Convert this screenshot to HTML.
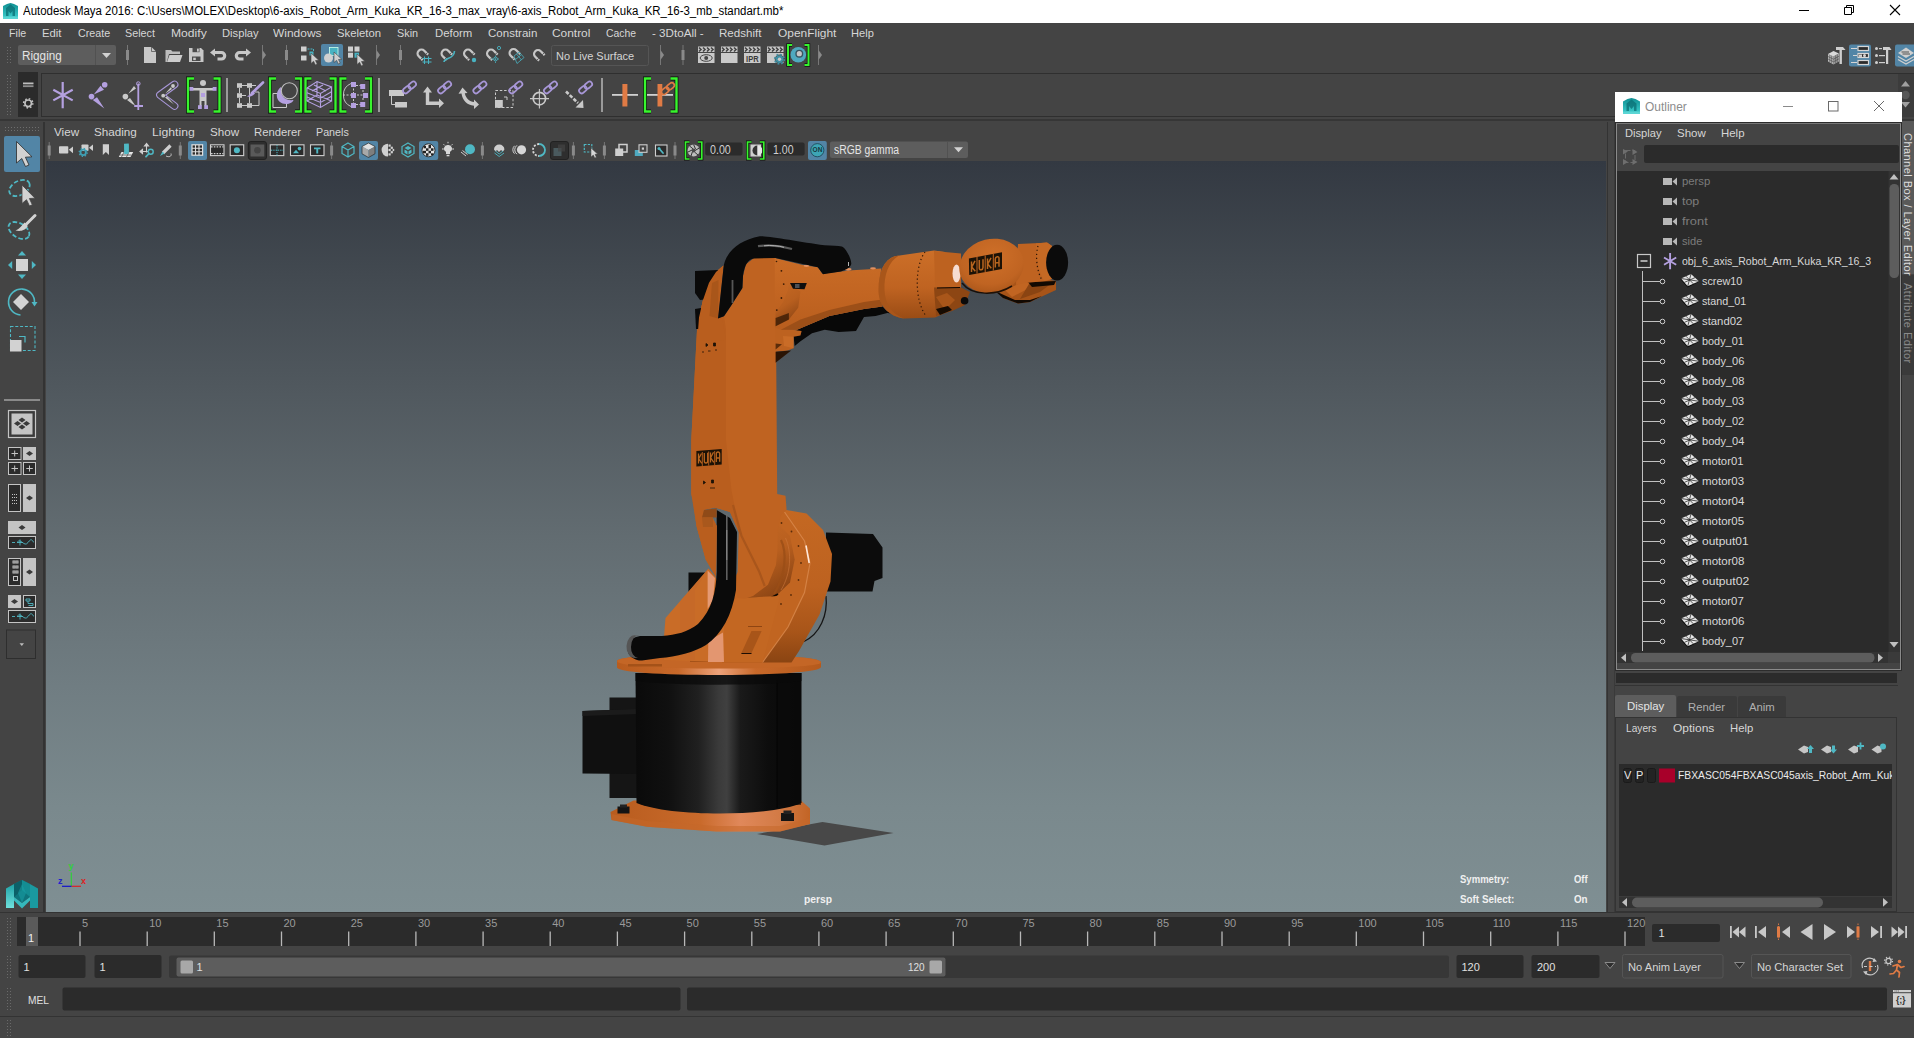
<!DOCTYPE html>
<html><head><meta charset="utf-8"><title>Autodesk Maya 2016</title>
<style>
*{box-sizing:border-box;margin:0;padding:0}
html,body{width:1914px;height:1038px;overflow:hidden;background:#444444;font-family:"Liberation Sans",sans-serif;font-size:11px;color:#d8d8d8}
.a{position:absolute}
.t{position:absolute;white-space:nowrap;line-height:14px}
svg{position:absolute;overflow:visible}
.m{top:26px;color:#d6d6d6;font-size:11px}
.pm{top:124.5px;color:#d6d6d6;font-size:11px}
.hud{color:#f0f0f0;font-size:10px;font-weight:bold;line-height:12px}
.tl{top:916px;color:#9a9a9a;font-size:11px}

</style></head>
<body>
<!-- titlebar.html -->
<div class="a" style="left:0;top:0;width:1914px;height:23px;background:#ffffff"></div>
<svg style="left:3px;top:3px" width="15" height="16" viewBox="0 0 15 16">
  <defs><linearGradient id="mg" x1="0" y1="0" x2="0" y2="1"><stop offset="0" stop-color="#0f8f92"/><stop offset="1" stop-color="#3fd0cf"/></linearGradient></defs>
  <path d="M0 3 L4 1 L7.5 0 L11 1 L15 3 L15 16 L0 16 Z" fill="url(#mg)"/>
  <path d="M3 13 L3 5 L7.5 1.5 L12 5 L12 13 L9.5 13 L9.5 8 L7.5 10.5 L5.500 8 L5.5 13 Z" fill="#0b6f74" opacity=".75"/>
  <rect x="0" y="13.500" width="15" height="2.5" fill="#6fdcda" opacity=".6"/>
</svg>
<div class="t" style="transform:scaleX(0.9158);transform-origin:0 50%;left:23px;top:3.500px;color:#000;font-size:12.500px;line-height:15px">Autodesk Maya 2016: C:\Users\MOLEX\Desktop\6-axis_Robot_Arm_Kuka_KR_16-3_max_vray\6-axis_Robot_Arm_Kuka_KR_16-3_mb_standart.mb*</div>
<svg style="left:1790px;top:0" width="124" height="23" viewBox="0 0 124 23">
  <path d="M9 10.500 H19" stroke="#000" stroke-width="1" fill="none"/>
  <path d="M56.5 7.500 V5.500 H63.5 V12.500 H61.5 M54.5 7.500 H61.5 V14.500 H54.5 Z" stroke="#000" stroke-width="1" fill="none"/>
  <path d="M100 5 L110 15 M110 5 L100 15" stroke="#000" stroke-width="1.1" fill="none"/>
</svg>

<!-- menubar.html -->
<div class="a" style="left:0;top:23px;width:1914px;height:21px;background:#444444"></div>
<span class="t m" style="transform:scaleX(0.9699);transform-origin:0 50%;left:9.4px">File</span>
<span class="t m" style="transform:scaleX(1.0280);transform-origin:0 50%;left:42.3px">Edit</span>
<span class="t m" style="transform:scaleX(0.9748);transform-origin:0 50%;left:77.6px">Create</span>
<span class="t m" style="transform:scaleX(0.9778);transform-origin:0 50%;left:125.3px">Select</span>
<span class="t m" style="transform:scaleX(1.1016);transform-origin:0 50%;left:170.5px">Modify</span>
<span class="t m" style="transform:scaleX(1.0172);transform-origin:0 50%;left:221.5px">Display</span>
<span class="t m" style="transform:scaleX(1.0868);transform-origin:0 50%;left:273.2px">Windows</span>
<span class="t m" style="transform:scaleX(1.0277);transform-origin:0 50%;left:337.4px">Skeleton</span>
<span class="t m" style="transform:scaleX(0.9857);transform-origin:0 50%;left:397.4px">Skin</span>
<span class="t m" style="transform:scaleX(1.0343);transform-origin:0 50%;left:434.6px">Deform</span>
<span class="t m" style="transform:scaleX(1.0472);transform-origin:0 50%;left:487.5px">Constrain</span>
<span class="t m" style="transform:scaleX(1.0826);transform-origin:0 50%;left:552.4px">Control</span>
<span class="t m" style="transform:scaleX(0.9466);transform-origin:0 50%;left:606.4px">Cache</span>
<span class="t m" style="transform:scaleX(1.0571);transform-origin:0 50%;left:652.1px">- 3DtoAll -</span>
<span class="t m" style="transform:scaleX(1.0530);transform-origin:0 50%;left:719.4px">Redshift</span>
<span class="t m" style="transform:scaleX(1.0852);transform-origin:0 50%;left:777.6px">OpenFlight</span>
<span class="t m" style="transform:scaleX(1.0077);transform-origin:0 50%;left:851.1px">Help</span>

<!-- statusline.html -->
<svg style="left:0;top:44px" width="1914" height="26" viewBox="0 44 1914 26">
<defs>
 <g id="hdl"><rect x="-0.500" y="45" width="1" height="20" fill="#777"/><rect x="-1.500" y="50" width="3" height="10" fill="#8a8a8a"/></g>
 <g id="col"><rect x="-0.500" y="45" width="1" height="20" fill="#777"/><path d="M0 50 L3.500 55 L0 60 Z" fill="#8a8a8a"/></g>
 <g id="cur"><path d="M0 0 L0 10.500 L2.600 8.300 L4.400 12 L6.200 11.100 L4.500 7.500 L7.800 7.300 Z" fill="#cfcfcf" stroke="#444" stroke-width=".6"/></g>
 <g id="mag"><path d="M-3.900 5.500 V0 A3.900 3.900 0 0 1 3.900 0 V5.500" stroke="#c6c6c6" stroke-width="2.300" fill="none"/><path d="M-5.200 3.600 H-2.600 M2.600 3.600 H5.200" stroke="#444" stroke-width=".8"/></g>
</defs>
<!-- grip dots -->
<g fill="#6a6a6a"><rect x="7" y="47" width="1" height="1"/><rect x="10" y="47" width="1" height="1"/><rect x="7" y="50" width="1" height="1"/><rect x="10" y="50" width="1" height="1"/><rect x="7" y="53" width="1" height="1"/><rect x="10" y="53" width="1" height="1"/><rect x="7" y="56" width="1" height="1"/><rect x="10" y="56" width="1" height="1"/><rect x="7" y="59" width="1" height="1"/><rect x="10" y="59" width="1" height="1"/><rect x="7" y="62" width="1" height="1"/><rect x="10" y="62" width="1" height="1"/></g>
<!-- Rigging dropdown -->
<rect x="18" y="45" width="98" height="20" rx="2" fill="#5d5d5d"/>
<rect x="95" y="45" width="1" height="20" fill="#515151"/>
<path d="M102 53 L111 53 L106.500 58 Z" fill="#d2d2d2"/>
<use href="#hdl" x="127.500"/>
<!-- new -->
<path d="M144 47 H151.500 L156 51.500 V63 H144 Z" fill="#c8c8c8"/><path d="M151.500 47 V51.500 H156" fill="none" stroke="#555" stroke-width=".8"/>
<!-- open -->
<path d="M165.500 62 V50 H171 L172.500 51.500 H180 V54 H169 L166.800 62 Z" fill="#bdbdbd"/><path d="M169.500 55 H182.500 L180 62 H167 Z" fill="#cdcdcd"/>
<!-- save -->
<path d="M189 48 H201 L203.500 50.500 V62 H189 Z" fill="#c8c8c8"/><rect x="192.500" y="48" width="7" height="4.200" fill="#4a4a4a"/><rect x="197" y="48.600" width="1.800" height="3" fill="#c8c8c8"/><rect x="192" y="56.500" width="8.500" height="4.500" fill="#4a4a4a"/><rect x="193.200" y="57.700" width="2.600" height="2.400" fill="#c8c8c8"/>
<!-- undo -->
<path d="M210 52.500 L215 48.500 V51 H221.500 A4.800 4.800 0 0 1 221.500 60.600 H217.500 V57.600 H221.300 A1.800 1.800 0 0 0 221.300 54 H215 V56.500 Z" fill="#c8c8c8"/>
<!-- redo -->
<path d="M251 52.500 L246 48.500 V51 H239.500 A4.800 4.800 0 0 0 239.500 60.600 H243.500 V57.600 H239.700 A1.800 1.800 0 0 1 239.700 54 H246 V56.500 Z" fill="#c8c8c8"/>
<use href="#col" x="262.500"/>
<use href="#hdl" x="286.500"/>
<!-- select by hierarchy -->
<rect x="301" y="46.500" width="5.500" height="5" fill="#cfcfcf"/><rect x="301" y="55.500" width="5.500" height="5" fill="#cfcfcf"/><path d="M307.500 49 H313.500 V52" stroke="#49b3c2" stroke-width="1" fill="none" stroke-dasharray="2 1"/><rect x="309.500" y="51.500" width="4" height="4" fill="#49b3c2"/><use href="#cur" x="311" y="53"/>
<!-- select by object (active) -->
<rect x="321" y="44" width="22" height="22" rx="2" fill="#5285a6"/>
<rect x="329.500" y="47.500" width="8.500" height="8" fill="#49b3c2" stroke="#cfe" stroke-width=".8"/><circle cx="328.500" cy="58" r="4.500" fill="#d0d0d0"/><use href="#cur" x="334" y="52"/>
<!-- select by component -->
<rect x="348" y="46.500" width="5" height="5" fill="#cfcfcf"/><rect x="354.500" y="46.500" width="5" height="5" fill="#cfcfcf"/><rect x="348" y="52.700" width="5" height="5" fill="#cfcfcf"/><rect x="354.500" y="52.700" width="4.500" height="5" fill="#49b3c2"/><use href="#cur" x="357" y="54"/>
<use href="#col" x="376.500"/>
<use href="#hdl" x="400.500"/>
<!-- snap magnets -->
<g transform="translate(421.500,53.500) rotate(-45)"><use href="#mag"/></g>
<path d="M424.500 56.500 V64 M428.500 56.500 V64 M422.500 58.500 H431.500 M422.500 62 H431.500" stroke="#49b3c2" stroke-width="1.100" fill="none"/>
<g transform="translate(445.500,53.500) rotate(-45)"><use href="#mag"/></g>
<path d="M444 62 C444 57 454 60 454.500 51" stroke="#49b3c2" stroke-width="1.600" fill="none"/>
<g transform="translate(468,53.500) rotate(-45)"><use href="#mag"/></g>
<circle cx="474" cy="60" r="2.200" fill="#49b3c2"/>
<g transform="translate(491,53.500) rotate(-45)"><use href="#mag"/></g>
<circle cx="499" cy="48" r="1.600" fill="none" stroke="#49b3c2" stroke-width=".9"/><circle cx="495.500" cy="59" r="1.900" fill="none" stroke="#49b3c2" stroke-width=".9"/><path d="M495.500 55.500 V63 M491.500 59 H500.500" stroke="#49b3c2" stroke-width=".8" stroke-dasharray="1.500 1.500"/>
<g transform="translate(513.500,53) rotate(-45)"><use href="#mag"/></g>
<path d="M514 56 L519 52 L524 57.500 L517 63.500 Z M516.500 54 L521.500 60 M515.500 59.500 L521 55" stroke="#49b3c2" stroke-width=".8" fill="none"/>
<g transform="translate(538,54) rotate(-45)"><use href="#mag"/></g>
<!-- no live surface -->
<rect x="551.500" y="45.500" width="97" height="20" rx="2" fill="#444" stroke="#555" stroke-width="1"/>
<use href="#col" x="660.500"/>
<use href="#hdl" x="683"/>

<!-- render icons -->
<defs>
 <g id="clap"><rect x="0" y="0" width="16.500" height="5.500" fill="#c9c9c9"/><path d="M1 1 L3 3 L1 5 M5 1 L7 3 L5 5 M9 1 L11 3 L9 5 M13 1 L15 3 L13 5" stroke="#444" stroke-width="1.600" fill="none"/><rect x="0" y="6.500" width="16.500" height="10" fill="#c9c9c9"/></g>
</defs>
<use href="#clap" x="698" y="46.500"/>
<ellipse cx="706.200" cy="58" rx="6" ry="3.300" fill="none" stroke="#444" stroke-width="1"/><circle cx="706.200" cy="58" r="2" fill="#444"/>
<use href="#clap" x="721" y="46.500"/>
<use href="#clap" x="744" y="46.500"/>
<text x="752.300" y="61.600" font-size="8.500" font-weight="bold" text-anchor="middle" fill="#3a3a3a" font-family="Liberation Sans, sans-serif" textLength="12.500" lengthAdjust="spacingAndGlyphs">IPR</text>
<use href="#clap" x="767" y="46.500"/>
<circle cx="779.500" cy="59.200" r="4.300" fill="#3f8fa3" stroke="#444" stroke-width=".8"/><circle cx="779.500" cy="59.200" r="4.800" fill="none" stroke="#3f8fa3" stroke-width="1.600" stroke-dasharray="1.800 1.970"/><circle cx="779.500" cy="59.200" r="1.700" fill="#c9c9c9"/>
<!-- bracket render -->
<circle cx="798.300" cy="54.800" r="7.800" fill="#4fa9bf"/><circle cx="799.300" cy="53.700" r="3.300" fill="#c6c6c6" stroke="#3a5560" stroke-width="1.400"/>
<path d="M792 45 H788 V65 H792 M804.500 45 H808.500 V65 H804.500" stroke="#111" stroke-width="3.400" fill="none"/>
<path d="M792 45 H788 V65 H792 M804.500 45 H808.500 V65 H804.500" stroke="#35f52c" stroke-width="2" fill="none"/>
<use href="#col" x="818.500"/>
<!-- right icons -->
<g>
 <path d="M1828 54 L1833.500 51 L1839 53.500 L1833.500 56.500 Z" fill="#dadada"/><path d="M1828 54 L1833.500 56.500 V64.500 L1828 61.500 Z" fill="#bdbdbd"/><path d="M1833.500 56.500 L1839 53.500 V61.500 L1833.500 64.500 Z" fill="#a4a4a4"/>
 <path d="M1828 56.500 L1833.500 59.200 L1839 56.200 M1828 59 L1833.500 61.800 L1839 58.800 M1829.800 55 V62.500 M1831.700 56 V63.500 M1835.300 55.500 V63.500 M1837.200 54.500 V62.500" stroke="#444" stroke-width=".6" fill="none"/>
 <path d="M1836 47 H1843 L1845.500 50 H1836 Z" fill="#cfcfcf"/><rect x="1839.500" y="50" width="2.400" height="14" fill="#cfcfcf"/>
 <rect x="1849" y="44.500" width="22" height="22" rx="2" fill="#5285a6"/>
 <g fill="none" stroke="#d6d6d6" stroke-width="1.200"><path d="M1851 48.500 H1857 M1853 55.500 H1857 M1851 62.500 H1857"/><rect x="1858" y="46.500" width="10.500" height="4" fill="#2c2c2c"/><rect x="1858" y="53.500" width="10.500" height="4" fill="#2c2c2c"/><rect x="1858" y="60.500" width="10.500" height="4" fill="#2c2c2c"/></g>
 <rect x="1859" y="54.500" width="3" height="2.400" fill="#d6d6d6"/><circle cx="1864.500" cy="55.600" r="1.500" fill="#d6d6d6"/>
 <g fill="#cfcfcf"><circle cx="1876.500" cy="48.500" r="1.500"/><circle cx="1876.500" cy="55.500" r="1.500"/><circle cx="1876.500" cy="62.500" r="1.500"/><rect x="1879" y="48" width="3" height="1.200"/><rect x="1879" y="55" width="6" height="1.200"/><rect x="1879" y="62" width="6" height="1.200"/><path d="M1883 47 H1889.500 L1891.500 50 H1883 Z"/><rect x="1886" y="50" width="2.200" height="14"/></g>
 <rect x="1895" y="44.500" width="22" height="22" rx="2" fill="#5285a6"/>
 <path d="M1898 59.500 L1906 64 L1914 59.500 M1898 56.500 L1906 61 L1914 56.500" stroke="#cfcfcf" stroke-width="1.300" fill="none"/>
 <path d="M1898 53 L1906 47.500 L1914 53 L1906 58 Z" fill="#cfcfcf"/><path d="M1901.500 52 H1909 M1902.500 54 H1910" stroke="#444" stroke-width=".9"/>
</g>
</svg>
<div class="t" style="transform:scaleX(0.9778);transform-origin:0 50%;left:21.500px;top:49px;color:#e4e4e4;font-size:12px">Rigging</div>
<div class="t" style="transform:scaleX(0.9557);transform-origin:0 50%;left:556px;top:49px;color:#d4d4d4;font-size:11.500px">No Live Surface</div>

<!-- shelf.html -->
<div class="a" style="left:18px;top:72px;width:20px;height:45px;background:#2b2b2b"></div>
<div class="a" style="left:41px;top:73px;width:1873px;height:44px;background:#444;border:1px solid #2f2f2f;border-right:none"></div>
<svg style="left:0;top:70px" width="1914" height="50" viewBox="0 70 1914 50">
<defs>
 <g id="brk"><path d="M6 0 H0 V33 H6" stroke="#0a0a0a" stroke-width="3.800" fill="none"/><path d="M6 0 H0 V33 H6" stroke="#38f52e" stroke-width="2.400" fill="none"/></g>
 <g id="brkr"><path d="M-6 0 H0 V33 H-6" stroke="#0a0a0a" stroke-width="3.800" fill="none"/><path d="M-6 0 H0 V33 H-6" stroke="#38f52e" stroke-width="2.400" fill="none"/></g>
 <g id="chain" fill="none" stroke="#a897d8" stroke-width="1.700"><g transform="rotate(-40)"><rect x="-7.500" y="-2.600" width="8.500" height="5.200" rx="2.600"/><rect x="-0.500" y="-2.600" width="8.500" height="5.200" rx="2.600"/></g></g>
 <g id="chaino" fill="none" stroke="#e07b45" stroke-width="1.700"><g transform="rotate(-40)"><rect x="-7.500" y="-2.600" width="8.500" height="5.200" rx="2.600"/><rect x="-0.500" y="-2.600" width="8.500" height="5.200" rx="2.600"/></g></g>
</defs>
<!-- grip -->
<g fill="#6a6a6a"><rect x="7" y="75" width="1" height="1"/><rect x="10" y="75" width="1" height="1"/><rect x="7" y="78" width="1" height="1"/><rect x="10" y="78" width="1" height="1"/><rect x="7" y="81" width="1" height="1"/><rect x="10" y="81" width="1" height="1"/><rect x="7" y="84" width="1" height="1"/><rect x="10" y="84" width="1" height="1"/><rect x="7" y="87" width="1" height="1"/><rect x="10" y="87" width="1" height="1"/><rect x="7" y="90" width="1" height="1"/><rect x="10" y="90" width="1" height="1"/><rect x="7" y="93" width="1" height="1"/><rect x="10" y="93" width="1" height="1"/><rect x="7" y="96" width="1" height="1"/><rect x="10" y="96" width="1" height="1"/><rect x="7" y="99" width="1" height="1"/><rect x="10" y="99" width="1" height="1"/><rect x="7" y="102" width="1" height="1"/><rect x="10" y="102" width="1" height="1"/><rect x="7" y="105" width="1" height="1"/><rect x="10" y="105" width="1" height="1"/><rect x="7" y="108" width="1" height="1"/><rect x="10" y="108" width="1" height="1"/><rect x="7" y="111" width="1" height="1"/><rect x="10" y="111" width="1" height="1"/><rect x="7" y="114" width="1" height="1"/><rect x="10" y="114" width="1" height="1"/></g>
<!-- tab icons -->
<rect x="23" y="82.500" width="10.500" height="1.800" fill="#bdbdbd"/><rect x="23" y="85.300" width="10.500" height="1.800" fill="#8e8e8e"/>
<circle cx="28.200" cy="103.300" r="3.300" fill="none" stroke="#c0c0c0" stroke-width="1.700"/><circle cx="28.200" cy="103.300" r="4.600" fill="none" stroke="#c0c0c0" stroke-width="1.500" stroke-dasharray="1.600 2.010"/>
<!-- joint -->
<path d="M62.700 82 V108.200 M53.300 89.800 L72.700 100.400 M53.300 100.400 L72.700 89.800" stroke="#b4a0e0" stroke-width="2.200" fill="none"/>
<!-- IK handle -->
<g fill="#b4a0e0"><circle cx="104.700" cy="84.800" r="2.800"/><circle cx="91.500" cy="96.600" r="2.800"/><path d="M100.500 85.800 L104 89.800 L93.800 94.600 Z"/><path d="M92.800 100 L97 97.300 L104.300 108.500 Z"/></g>
<!-- IK spline -->
<g fill="#c9c9c9"><circle cx="125.400" cy="96.600" r="2.800"/><path d="M134 86 L136 88.500 L128.300 93.800 Z M127 100 L130 98 L135 105 L133 104.500 Z"/></g>
<path d="M138.300 83.500 V110 M134.200 106 H143" stroke="#b4a0e0" stroke-width="1.800" fill="none"/><circle cx="138.300" cy="83.600" r="1.800" fill="none" stroke="#b4a0e0" stroke-width="1"/>
<!-- human IK chevron -->
<path d="M174.500 84.500 L160 95 L174.500 106" stroke="#a897d8" stroke-width="7.800" fill="none" stroke-linejoin="round" stroke-linecap="round"/>
<path d="M174.500 84.500 L160 95 L174.500 106" stroke="#444" stroke-width="5.600" fill="none" stroke-linejoin="round" stroke-linecap="round"/>
<g fill="#c9c9c9"><circle cx="173" cy="86" r="1.900"/><circle cx="163.200" cy="95.700" r="1.900"/><path d="M170.800 87.300 L172 89 L165.300 93.500 Z M165 97.500 L167 96.500 L174 104.500 Z"/></g>
<!-- bracket human -->
<use href="#brk" x="188" y="78.500"/><use href="#brkr" x="219.500" y="78.500"/>
<circle cx="203" cy="83" r="3" fill="#c9c9c9"/><path d="M193 88 H213 V90.500 H206.500 V106 H204.500 V101 H201.500 V106 H199.500 V90.500 H193 Z" fill="#c9c9c9"/>
<g fill="#b4a0e0"><rect x="189.500" y="87" width="3.800" height="3.800"/><rect x="212.700" y="87" width="3.800" height="3.800"/><rect x="201" y="93" width="4" height="4"/><rect x="198" y="105.200" width="3.800" height="3.800"/><rect x="204.200" y="105.200" width="3.800" height="3.800"/></g>
<rect x="226" y="78" width="2" height="34" fill="#9a9a9a"/>
<!-- paint weights -->
<g fill="#c9c9c9"><rect x="237" y="83.200" width="5" height="4.600"/><rect x="247" y="83.200" width="5" height="4.600"/><rect x="237" y="93.200" width="5" height="4.600"/><rect x="237" y="103.200" width="5" height="4.600"/><rect x="247" y="103.200" width="5" height="4.600"/></g>
<path d="M242 85.500 H247 M252 85.500 H256 M239.500 88 V93 M239.500 98 V103 M249.500 88 V103 M242 95.500 H246 M242 105.500 H247 M252 105.500 H259 V92 H255" stroke="#c9c9c9" stroke-width="1" fill="none"/>
<path d="M263 82.500 L252 93" stroke="#b4a0e0" stroke-width="2.600" stroke-linecap="round"/><path d="M253 91 L255 93.500 C252 97 249 97 247 96.500 C249.500 95.500 250.500 93 253 91 Z" fill="#b4a0e0"/>
<!-- bracket cluster -->
<use href="#brk" x="270" y="78.500"/><use href="#brkr" x="301" y="78.500"/>
<path d="M283 93.500 H273 V107.500 H286.500 V103" stroke="#c9c9c9" stroke-width="1" fill="none"/>
<path d="M281 87 C274 92 276 104 286 104 C290 104 293 102 293.500 100 C285 101 280 96 281 87 Z" fill="#b4a0e0"/>
<circle cx="289.300" cy="90.700" r="8" fill="#444" stroke="#c0c0c0" stroke-width="1.100"/>
<!-- bracket lattice -->
<use href="#brk" x="305.500" y="78.500"/><use href="#brkr" x="335.500" y="78.500"/>
<g stroke="#b4a0e0" stroke-width="1.100" fill="none"><path d="M307 88 L317 81.500 L331.500 87 L331.500 101 L320.500 107.500 L307 101 Z"/><path d="M307 88 L320.500 93.500 L331.500 87 M320.500 93.500 V107.500 M307 92.700 L320.500 98.200 L331.500 91.700 M307 97 L320.500 102.500 L331.500 96.200 M317 81.500 V95 L307 101 M317 95 L331.500 101 M312 91 L323 85 M326 91 L314 85"/></g>
<!-- bracket wrap -->
<use href="#brk" x="340.500" y="78.500"/><use href="#brkr" x="371" y="78.500"/>
<path d="M351 83.500 A12.500 12.500 0 0 0 351 106.500" stroke="#c0c0c0" stroke-width="1" fill="none"/>
<path d="M343 95 H363 M353.500 85 V104 M356 85.500 H361 M363 90 V92 M363 98 V100 M356 104.500 H361" stroke="#c9c9c9" stroke-width="1" stroke-dasharray="2 1.500" fill="none"/>
<g fill="#b4a0e0"><rect x="351" y="82" width="5" height="5"/><rect x="360.200" y="84" width="5" height="5"/><rect x="351" y="93" width="5" height="5"/><rect x="363" y="93" width="5" height="5"/><rect x="351" y="103" width="5" height="5"/><rect x="360.200" y="102" width="5" height="5"/></g>
<rect x="378" y="78" width="2" height="34" fill="#9a9a9a"/>
<!-- parent constraint -->
<rect x="389" y="90" width="15" height="6" fill="#c9c9c9"/><rect x="395" y="102" width="12" height="5.500" fill="#c9c9c9"/><path d="M391.500 96 V104.500 H395" stroke="#c9c9c9" stroke-width="1" fill="none"/><use href="#chain" x="409.300" y="87.600"/>
<!-- point -->
<path d="M427.500 86.500 L432 92.500 H429.200 V101.500 H439 V98.500 L444 103.200 L439 108 V105 H425.800 V92.500 H423 Z" fill="#c9c9c9"/><use href="#chain" x="444.400" y="87.600"/>
<!-- orient -->
<path d="M462.500 87.500 L467.500 93 L464.800 93.200 C466 98.500 469.500 101.500 474 102 L474 99.500 L479 104.500 L474 109 L474 105.800 C467 105 462.500 100.500 461.500 93.500 L458.500 93.800 Z" fill="#c9c9c9"/><use href="#chain" x="479.700" y="87.600"/>
<!-- scale -->
<rect x="495.500" y="90.500" width="17.500" height="17" fill="none" stroke="#c9c9c9" stroke-width="1" stroke-dasharray="2.500 1.800"/><rect x="495" y="100" width="7.800" height="7.800" fill="#c9c9c9"/><path d="M504 97 H507 V100" stroke="#c9c9c9" stroke-width="1" fill="none"/><use href="#chain" x="515.600" y="87.600"/>
<!-- aim -->
<circle cx="539.400" cy="98.600" r="6.200" fill="none" stroke="#c9c9c9" stroke-width="1.700"/><path d="M530 98.600 H549 M539.400 89 V108.500" stroke="#c9c9c9" stroke-width="1.100"/><use href="#chain" x="550.300" y="87.600"/>
<!-- pole vector -->
<path d="M566 91.500 L578 103" stroke="#c9c9c9" stroke-width="2.600" stroke-dasharray="3.600 1.600"/><path d="M583.500 108 L575.500 107.500 L583 100 Z" fill="#c9c9c9"/><use href="#chain" x="585.400" y="87.600"/>
<rect x="601" y="78" width="2" height="34" fill="#9a9a9a"/>
<!-- orange plus -->
<rect x="612" y="94" width="26" height="1.800" fill="#d0d0d0"/><rect x="622.400" y="84" width="5" height="22.500" fill="#e07b45"/>
<!-- bracket orange -->
<use href="#brk" x="645" y="78.500"/><use href="#brkr" x="676.500" y="78.500"/>
<rect x="647" y="94" width="26" height="1.800" fill="#d0d0d0"/><rect x="657.500" y="84" width="4.800" height="22.500" fill="#e07b45"/><use href="#chaino" x="667.600" y="88.800"/>
<!-- right scroll arrows -->
<rect x="1898" y="74" width="16" height="43" fill="#3c3c3c"/><path d="M1905.500 81 L1910 86.500 H1901 Z" fill="#a0a0a0"/><path d="M1905.500 107.500 L1910 102 H1901 Z" fill="#a0a0a0"/><circle cx="1905.500" cy="95" r="4.200" fill="#575757"/>
</svg>

<!-- toolbox.html -->
<div class="a" style="left:0;top:119px;width:1914px;height:2px;background:#363636"></div>
<div class="a" style="left:43px;top:122px;width:2px;height:790px;background:#333"></div>
<svg style="left:0;top:120px" width="46" height="792" viewBox="0 120 46 792">
<g fill="#6e6e6e"><rect x="5" y="127" width="1" height="1"/><rect x="5" y="130" width="1" height="1"/><rect x="8" y="127" width="1" height="1"/><rect x="8" y="130" width="1" height="1"/><rect x="11" y="127" width="1" height="1"/><rect x="11" y="130" width="1" height="1"/><rect x="14" y="127" width="1" height="1"/><rect x="14" y="130" width="1" height="1"/><rect x="17" y="127" width="1" height="1"/><rect x="17" y="130" width="1" height="1"/><rect x="20" y="127" width="1" height="1"/><rect x="20" y="130" width="1" height="1"/><rect x="23" y="127" width="1" height="1"/><rect x="23" y="130" width="1" height="1"/><rect x="26" y="127" width="1" height="1"/><rect x="26" y="130" width="1" height="1"/><rect x="29" y="127" width="1" height="1"/><rect x="29" y="130" width="1" height="1"/><rect x="32" y="127" width="1" height="1"/><rect x="32" y="130" width="1" height="1"/><rect x="35" y="127" width="1" height="1"/><rect x="35" y="130" width="1" height="1"/><rect x="38" y="127" width="1" height="1"/><rect x="38" y="130" width="1" height="1"/></g>
<!-- select (active) -->
<rect x="4" y="136" width="36" height="36" rx="2" fill="#5285a6"/>
<path d="M16.500 141.500 L16.500 163 L21.800 158.500 L25.500 166.500 L29 165 L25.400 157.200 L32 156.800 Z" fill="#d2d2d2" stroke="#2b2b2b" stroke-width=".8"/>
<!-- lasso -->
<ellipse cx="19.500" cy="188" rx="11" ry="7" fill="none" stroke="#4fb8c4" stroke-width="1.800" stroke-dasharray="4.500 2.200" transform="rotate(-28 19.500 188)"/>
<path d="M22 185 L22 203.500 L26.500 199.700 L29.500 206 L32.300 204.700 L29.400 198.500 L35 198.200 Z" fill="#d2d2d2" stroke="#444" stroke-width=".8"/>
<!-- paint select -->
<ellipse cx="19" cy="230.500" rx="11.500" ry="7" fill="none" stroke="#4fb8c4" stroke-width="1.800" stroke-dasharray="4.500 2.200" transform="rotate(32 19 230.500)"/>
<path d="M35 215.500 L26 224.500" stroke="#d2d2d2" stroke-width="3" stroke-linecap="round"/><path d="M24.500 222.500 L27.800 226 C25 231 20 231.500 15.500 230.500 C20 229 21.500 225.500 24.500 222.500 Z" fill="#d2d2d2"/>
<!-- move -->
<rect x="16" y="259" width="12" height="12" fill="#d2d2d2"/><g fill="#4fb8c4"><path d="M22 251 L26 255.500 H18 Z"/><path d="M22 279 L26 274.500 H18 Z"/><path d="M8 265 L12.200 261 V269 Z"/><path d="M36 265 L31.800 261 V269 Z"/></g>
<!-- rotate -->
<path d="M20.500 315 A13 13 0 1 1 34.500 303" fill="none" stroke="#4fb8c4" stroke-width="1.600"/><path d="M31.500 302 H37.500 L34.500 306.500 Z" fill="#4fb8c4"/>
<path d="M21 294 L29 302 L21 310 L13 302 Z" fill="#d2d2d2"/>
<!-- scale -->
<rect x="10.500" y="326.500" width="24.500" height="24" fill="none" stroke="#4fb8c4" stroke-width="1.100" stroke-dasharray="3 1.800"/><rect x="10" y="340" width="11.500" height="11.500" fill="#d2d2d2"/><path d="M19 336.500 H25 V342.500" stroke="#4fb8c4" stroke-width="1.200" fill="none"/>
<!-- separator -->
<rect x="4" y="399" width="36" height="2" fill="#8a8a8a"/>
<!-- layouts -->
<g fill="#2b2b2b" stroke="#c4c4c4" stroke-width="1">
 <rect x="8.500" y="410.500" width="27" height="27" stroke-width="1.200" fill="#3a3a3a"/><rect x="11.500" y="413.500" width="21" height="21" fill="#c4c4c4" stroke="none"/>
 <rect x="8.500" y="447.500" width="12.500" height="12"/><rect x="23.500" y="447.500" width="12" height="12" fill="#c4c4c4"/><rect x="8.500" y="462.500" width="12.500" height="12"/><rect x="23.500" y="462.500" width="12" height="12"/>
 <path d="M11.500 453.500 H18 M14.700 450.500 V456.500 M11.500 468.500 H18 M14.700 465.500 V471.500 M26.300 468.500 H32.800 M29.500 465.500 V471.500"/>
 <rect x="8.500" y="484.500" width="12" height="27"/><rect x="23.500" y="484.500" width="12" height="27" fill="#c4c4c4"/>
 <path d="M12 494.500 H17.500 M12 497.500 H17.500 M12 500.500 H17.500 M12 503.500 H17.500" stroke-dasharray="1 1" />
 <rect x="8.500" y="521.500" width="27" height="12" fill="#c4c4c4"/><rect x="8.500" y="536.500" width="27" height="12"/>
 <rect x="8.500" y="558.500" width="12" height="27"/><rect x="23.500" y="558.500" width="12" height="27" fill="#c4c4c4"/>
 <rect x="13" y="561" width="2" height="2"/><rect x="16" y="561" width="2" height="2"/><rect x="13" y="566" width="2" height="2"/><rect x="16" y="566" width="2" height="2"/><rect x="13" y="571" width="2" height="2"/><rect x="16" y="571" width="2" height="2"/><rect x="13.500" y="576.500" width="4" height="4"/>
 <rect x="8.500" y="595.500" width="12" height="12" fill="#c4c4c4"/><rect x="23.500" y="595.500" width="12" height="12"/><rect x="8.500" y="610.500" width="27" height="12"/>
</g>
<path d="M12 542.500 H15 M17 542.500 C21 537, 24 548, 28 542.500 S32 541 34 542.500 M20 539.500 V545.500 M17 542.500 H23" stroke="#4fb8c4" stroke-width=".9" fill="none"/>
<path d="M12 616.500 H15 M17 616.500 C21 611, 24 622, 28 616.500 S32 615 34 616.500 M20 613.500 V619.500 M17 616.500 H23" stroke="#4fb8c4" stroke-width=".9" fill="none"/>
<path d="M26 599 H30 V601 H26 Z M28 601 V603.500 H33 V605.500 H28.500" stroke="#4fb8c4" stroke-width=".9" fill="none"/>
<g fill="#3a3a3a"><path d="M22 417.500 L25.500 420 L22 422.500 L18.500 420 Z M17.500 421 L21 423.500 L17.500 426 L14 423.500 Z M26.500 421 L30 423.500 L26.500 426 L23 423.500 Z M22 424.500 L25.500 427 L22 429.500 L18.500 427 Z"/>
<path d="M29.500 451 L33 453.500 L29.500 456 L26 453.500 Z"/><path d="M29.500 495.500 L33 498 L29.500 500.500 L26 498 Z"/><path d="M22 525 L25.500 527.500 L22 530 L18.500 527.500 Z"/><path d="M29.500 569.500 L33 572 L29.500 574.500 L26 572 Z"/><path d="M14.500 599 L18 601.500 L14.500 604 L11 601.500 Z"/></g>
<rect x="6.500" y="630" width="29" height="28.500" fill="none" stroke="#2e2e2e" stroke-width="1"/><path d="M19.500 643.200 H24 L21.800 646 Z" fill="#bbb"/>
<!-- maya logo -->
<defs><linearGradient id="ml" x1="0" y1="0" x2="0" y2="1"><stop offset="0" stop-color="#1fa2a6"/><stop offset="1" stop-color="#6fe0dc"/></linearGradient></defs>
<path d="M6 888.500 L14 884 L14 908 L6 908 Z" fill="url(#ml)"/>
<path d="M38 888.500 L30 884 L30 908 L38 908 Z" fill="#1a9aa0"/>
<path d="M14 884 L22 880 L30 884 L30 897 L22 903 L14 897 Z" fill="#0e747c"/>
<path d="M22 880 L30 884 L30 897 L22 890 Z" fill="#148d93"/><path d="M22 880 L14 884 L14 897 L22 890 Z" fill="#0b6068"/><path d="M22 884 L26 893 L22 903 L18 893 Z" fill="#1aa0a5" opacity=".55"/>
<path d="M14 897 L22 903 L30 897 L30 900.500 L22 908.500 L14 900.500 Z" fill="#35b8bc"/>
</svg>

<!-- panel.html -->
<div class="t pm" style="transform:scaleX(1.0610);transform-origin:0 50%;left:54px">View</div>
<div class="t pm" style="transform:scaleX(1.0601);transform-origin:0 50%;left:94px">Shading</div>
<div class="t pm" style="transform:scaleX(1.1103);transform-origin:0 50%;left:152px">Lighting</div>
<div class="t pm" style="transform:scaleX(1.0570);transform-origin:0 50%;left:210px">Show</div>
<div class="t pm" style="transform:scaleX(1.0271);transform-origin:0 50%;left:254px">Renderer</div>
<div class="t pm" style="transform:scaleX(0.9750);transform-origin:0 50%;left:316px">Panels</div>
<svg style="left:46px;top:138px" width="1560" height="24" viewBox="46 138 1560 24">
<defs>
 <g id="ph"><rect x="-0.500" y="142" width="1" height="17" fill="#777"/><rect x="-1.500" y="145.500" width="3" height="10" fill="#8a8a8a"/></g>
 <g id="sbk"><path d="M4 0 H0 V17 H4" stroke="#0a0a0a" stroke-width="3" fill="none"/><path d="M4 0 H0 V17 H4" stroke="#38f52e" stroke-width="1.700" fill="none"/></g>
 <g id="sbkr"><path d="M-4 0 H0 V17 H-4" stroke="#0a0a0a" stroke-width="3" fill="none"/><path d="M-4 0 H0 V17 H-4" stroke="#38f52e" stroke-width="1.700" fill="none"/></g>
</defs>
<use href="#ph" x="49.200"/>
<!-- camera -->
<rect x="59" y="146.200" width="9.300" height="7.300" rx=".8" fill="#cfcfcf"/><path d="M68.800 149.800 L73 146.500 V153.200 Z" fill="#cfcfcf"/>
<!-- camera attrs -->
<rect x="81.500" y="144.500" width="7" height="6.500" rx=".8" fill="#cfcfcf"/><path d="M89 147.700 L93 144.500 V151 Z" fill="#cfcfcf"/>
<circle cx="83.200" cy="152.400" r="2.700" fill="none" stroke="#3f9fb3" stroke-width="1.800"/><circle cx="83.200" cy="152.400" r="4" fill="none" stroke="#3f9fb3" stroke-width="1.300" stroke-dasharray="1.400 1.740"/>
<!-- bookmark -->
<path d="M102.800 144.300 H109 V155 L105.900 152 L102.800 155 Z" fill="#cfcfcf"/>
<!-- image plane -->
<path d="M124 152.500 L128.700 143.500 V153.800 L124 154.500 Z" fill="#4fb8c4"/><path d="M121.500 152 L118.800 157 H130.500 L133.200 152 Z" fill="#e6e6e6"/><path d="M120 155 H131.500 M124 152 L121.500 157 M129 152 L126.500 157" stroke="#444" stroke-width=".7"/><path d="M124 143.800 L128.700 143.500 V153.800 L124.200 154.200 Z" fill="#4fb8c4"/>
<!-- 2d pan -->
<path d="M140.500 151.500 H148 M146.500 144 V152.500 M146.500 143.500 L144.500 146 H148.500 Z M140 151.500 L142.500 149.500 V153.500 Z" stroke="#cfcfcf" stroke-width="1.100" fill="#cfcfcf"/><circle cx="150.700" cy="151.700" r="2.500" fill="none" stroke="#4fb8c4" stroke-width="1.400"/><path d="M149 153.500 L146 156.700" stroke="#4fb8c4" stroke-width="1.800" stroke-linecap="round"/>
<!-- grease pencil -->
<path d="M170.500 145.500 L163 153" stroke="#cfcfcf" stroke-width="3.200"/><path d="M162.500 151.500 L164.500 153.500 L160 156 Z" fill="#4fb8c4"/><path d="M166 156 C169 157.500 172 156.500 171 153.500" stroke="#cfcfcf" stroke-width=".9" fill="none"/>
<use href="#ph" x="180.300"/>
<!-- grid active -->
<rect x="188" y="141" width="19" height="19" rx="2" fill="#5285a6"/>
<rect x="192" y="144.800" width="10.600" height="10.400" fill="#2b2b2b" stroke="#e0e0e0" stroke-width="1.200"/><path d="M195.500 145 V155 M199 145 V155 M192 148.300 H202.500 M192 151.800 H202.500" stroke="#e0e0e0" stroke-width="1.100"/>
<!-- film gate -->
<rect x="210.500" y="144.800" width="13.500" height="10.800" fill="#2b2b2b" stroke="#cfcfcf" stroke-width="1.100"/><path d="M211 146.800 H223.500 M211 153.600 H223.500" stroke="#cfcfcf" stroke-width="1.300" stroke-dasharray="1.600 1.200"/>
<!-- resolution gate -->
<rect x="230.200" y="144.800" width="13.500" height="10.800" fill="#2b2b2b" stroke="#cfcfcf" stroke-width="1.100"/><circle cx="236.900" cy="150.200" r="3" fill="#4fb8c4"/>
<!-- gate mask -->
<rect x="248.300" y="141.500" width="18.200" height="18" rx="2.500" fill="#2e2e2e" stroke="#222" stroke-width="1"/><rect x="250.500" y="144.500" width="13.800" height="12" fill="#5a5a5a"/><circle cx="257.400" cy="150.300" r="3.300" fill="#444"/>
<!-- field chart -->
<rect x="270.300" y="144.800" width="13.500" height="10.800" fill="#2b2b2b" stroke="#cfcfcf" stroke-width="1.100"/><path d="M271 150.200 H283.500 M277 145 V155.500" stroke="#4fb8c4" stroke-width="1" stroke-dasharray="1.300 1"/>
<!-- safe action -->
<rect x="290.500" y="144.800" width="13.500" height="10.800" fill="#2b2b2b" stroke="#cfcfcf" stroke-width="1.100"/><circle cx="299.500" cy="148.600" r="1.800" fill="#4fb8c4"/><path d="M293 153.200 L296 149.800 L299 153.200 Z" fill="#4fb8c4"/>
<!-- safe title -->
<rect x="310.500" y="144.800" width="13.500" height="10.800" fill="#2b2b2b" stroke="#cfcfcf" stroke-width="1.100"/><path d="M314 147.500 H320.500 V149.300 H318.200 V153.500 H316.300 V149.300 H314 Z" fill="#4fb8c4"/>
<use href="#ph" x="331.600"/>
<!-- wireframe cube -->
<path d="M348 143 L354 146.500 V153.500 L348 157 L342 153.500 V146.500 Z M342 146.500 L348 150 L354 146.500 M348 150 V157" fill="none" stroke="#4fb8c4" stroke-width="1.200"/>
<!-- shaded cube active -->
<rect x="359" y="141" width="19" height="19" rx="2" fill="#5285a6"/>
<path d="M368.500 143 L375 146.500 L368.500 150 L362 146.500 Z" fill="#e2e2e2"/><path d="M362 146.500 L368.500 150 V157.500 L362 153.800 Z" fill="#a8a8a8"/><path d="M375 146.500 L368.500 150 V157.500 L375 153.800 Z" fill="#7e7e7e"/><path d="M368.500 143 L375 146.500 V153.800 L368.500 157.500 L362 153.800 V146.500 Z" fill="none" stroke="#2b2b2b" stroke-width=".7"/>
<!-- half -->
<path d="M388 143.700 A6.400 6.400 0 0 0 388 156.500 Z" fill="#cfcfcf"/><g fill="#cfcfcf"><rect x="388.500" y="144.500" width="2.200" height="2.200"/><rect x="390.700" y="146.700" width="2.200" height="2.200"/><rect x="388.500" y="148.900" width="2.200" height="2.200"/><rect x="390.700" y="151.100" width="2.200" height="2.200"/><rect x="388.500" y="153.300" width="2.200" height="2.200"/><rect x="392.600" y="148.900" width="1.600" height="2.200"/></g>
<!-- textured cube -->
<path d="M408 143 L414 146.500 V153.500 L408 157 L402 153.500 V146.500 Z" fill="none" stroke="#4fb8c4" stroke-width="1.200"/><path d="M408 146 L411.500 148 L408 150 L404.500 148 Z M404.500 149.500 L407.500 151.200 V154.500 L404.500 152.800 Z M411.500 149.500 L408.500 151.200 V154.500 L411.500 152.800 Z" fill="#4fb8c4"/>
<!-- checker active -->
<rect x="419" y="141" width="19.200" height="19" rx="2" fill="#5285a6"/>
<circle cx="428.500" cy="150.300" r="6.500" fill="#e6e6e6" stroke="#222" stroke-width=".9"/>
<g fill="#222"><rect x="423.500" y="145.800" width="2.500" height="2.500"/><rect x="428.500" y="145" width="2.500" height="3.300"/><rect x="426" y="148.300" width="2.500" height="2.500"/><rect x="431" y="148.300" width="2.500" height="2.500"/><rect x="423" y="150.800" width="3" height="2.500"/><rect x="428.500" y="150.800" width="2.500" height="2.500"/><rect x="426" y="153.300" width="2.500" height="2.500"/><rect x="431" y="153.300" width="2.300" height="2"/></g>
<!-- light -->
<path d="M448 145 A3.600 3.600 0 0 1 450 151.800 V154 H446 V151.800 A3.600 3.600 0 0 1 448 145 Z" fill="#d6d6d6"/><rect x="446.600" y="154.800" width="2.800" height="1.500" fill="#d6d6d6"/><path d="M448 141.800 V143.300 M442 149 H443.800 M452.200 149 H454 M443.500 144.200 L444.700 145.400 M452.500 144.200 L451.300 145.400" stroke="#d6d6d6" stroke-width="1"/>
<!-- shadows -->
<circle cx="470" cy="149.300" r="5" fill="#4fb8c4"/><path d="M461 152 L466 156 M462.500 150.500 L467.500 154.500" stroke="#cfcfcf" stroke-width="1"/>
<use href="#ph" x="482.400"/>
<!-- AO -->
<path d="M494 149.500 A5.200 5 0 0 1 504.400 149.500 L503 151.500 L501 150 L499 152 L497 150 L495.500 151.500 Z" fill="#cfcfcf"/><path d="M494.500 153 L499.200 156.500 L504 153 M495.500 151 L499.200 154 L503 151" stroke="#4fb8c4" stroke-width=".9" fill="none"/>
<!-- motion blur -->
<path d="M514.500 145.800 A5.500 5.500 0 0 0 514.500 153.700 M517 145.300 A5.500 5.500 0 0 0 517 154.200" stroke="#cfcfcf" stroke-width="1" fill="none"/><circle cx="521.500" cy="149.800" r="4.600" fill="#d6d6d6"/>
<!-- AA -->
<path d="M539 144 A6 6 0 0 1 539 156" stroke="#4fb8c4" stroke-width="1.800" fill="none"/><path d="M539 144 A6 6 0 0 0 539 156" stroke="#d6d6d6" stroke-width="1.800" fill="none" stroke-dasharray="2 1.500"/>
<!-- DOF -->
<rect x="550.500" y="141.500" width="18" height="18" rx="2.500" fill="#2e2e2e" stroke="#222" stroke-width="1"/><rect x="553.500" y="148" width="8" height="8" fill="#4a5a5e"/><rect x="558" y="144.500" width="7" height="7" fill="#444" opacity=".7"/>
<use href="#ph" x="573.400"/>
<!-- isolate -->
<rect x="584.300" y="144.500" width="7.500" height="7.500" fill="none" stroke="#4fb8c4" stroke-width="1.200" stroke-dasharray="2.200 1.300"/><path d="M591 148 V157 L593.300 155 L594.800 158 L596.400 157.300 L595 154.300 L597.600 154.100 Z" fill="#d6d6d6" stroke="#444" stroke-width=".5"/>
<use href="#ph" x="604.400"/>
<!-- xray -->
<rect x="619" y="144.500" width="8" height="7.500" fill="#444" stroke="#cfcfcf" stroke-width="1.500"/><rect x="615.200" y="148.500" width="8" height="7.500" fill="#cfcfcf"/>
<!-- xray comps -->
<rect x="634.800" y="150" width="8" height="6" fill="#4fa9bf"/><rect x="639" y="144.800" width="8" height="7.500" fill="#444" stroke="#cfcfcf" stroke-width="1.100"/><rect x="641.800" y="147.500" width="2.200" height="2.200" fill="#cfcfcf"/>
<!-- xray joints -->
<rect x="655.500" y="145" width="11.500" height="11" fill="#2b2b2b" stroke="#cfcfcf" stroke-width="1.100"/><circle cx="659" cy="148.500" r="1.500" fill="#4fb8c4"/><path d="M659.500 149 L663 153" stroke="#4fb8c4" stroke-width="1.800" stroke-linecap="round"/>
<use href="#ph" x="675"/>
<!-- exposure -->
<circle cx="693.600" cy="150.500" r="6" fill="#bdbdbd"/><path d="M693.600 144.500 L695.500 149 M699.300 148 L695 150.500 M698 155 L694.500 152 M691 156 L692.500 151.500 M688 152 L692 150 M689.500 146 L693 148.800" stroke="#333" stroke-width="1"/><circle cx="693.600" cy="150.500" r="1.900" fill="#4a4a4a"/>
<use href="#sbk" x="685.500" y="142"/><use href="#sbkr" x="701.800" y="142"/>
<rect x="705.200" y="142.400" width="37.300" height="13.200" rx="2" fill="#2b2b2b"/>
<!-- gamma -->
<rect x="750.500" y="144.500" width="10.500" height="12" fill="#cfcfcf"/><path d="M757.500 145.500 A5 5 0 0 0 757.500 155.500 Z" fill="#333"/><path d="M757.500 145.500 A5 5 0 0 1 757.500 155.500 Z" fill="#e6e6e6"/>
<use href="#sbk" x="747.500" y="142"/><use href="#sbkr" x="763.800" y="142"/>
<rect x="767.400" y="142.400" width="37.200" height="13.200" rx="2" fill="#2b2b2b"/>
<!-- ON -->
<rect x="808" y="141" width="18.800" height="19" rx="2" fill="#5285a6"/><circle cx="817.300" cy="150.200" r="6.600" fill="#3da5b5" stroke="#1f4a58" stroke-width=".9"/>
<!-- dropdown -->
<rect x="830" y="141.600" width="138" height="16.400" rx="2" fill="#5d5d5d"/><rect x="947" y="141.600" width="1" height="16.400" fill="#515151"/><path d="M954 147.200 H963 L958.500 152.200 Z" fill="#d2d2d2"/>
</svg>
<div class="t" style="transform:scaleX(0.8904);transform-origin:0 50%;left:710px;top:143px;color:#d0d0d0;font-size:12px">0.00</div>
<div class="t" style="transform:scaleX(0.8776);transform-origin:0 50%;left:773px;top:143px;color:#d0d0d0;font-size:12px">1.00</div>
<div class="t" style="left:812.500px;top:146px;color:#163840;font-size:6.500px;font-weight:bold;line-height:8px;letter-spacing:.2px">ON</div>
<div class="t" style="transform:scaleX(0.8639);transform-origin:0 50%;left:833.500px;top:143px;color:#e4e4e4;font-size:12px">sRGB gamma</div>

<!-- viewport.html -->
<div class="a" style="left:46px;top:161px;width:1560px;height:751px;background:linear-gradient(#333942 0%,#424950 15%,#50585e 30%,#626c71 50%,#707d82 70%,#7a898d 86%,#7f8f93 100%)"></div>
<svg style="left:46px;top:161px" width="1560" height="751" viewBox="46 161 1560 751" shape-rendering="geometricPrecision">
<defs>
 <linearGradient id="cyl" x1="0" y1="0" x2="1" y2="0"><stop offset="0" stop-color="#0a0a0a"/><stop offset=".2" stop-color="#101010"/><stop offset=".38" stop-color="#202020"/><stop offset=".5" stop-color="#3a3a3a"/><stop offset=".55" stop-color="#404040"/><stop offset=".63" stop-color="#1a1a1a"/><stop offset=".8" stop-color="#0d0d0d"/><stop offset="1" stop-color="#080808"/></linearGradient>
 <linearGradient id="plate" x1="0" y1="0" x2="1" y2="0"><stop offset="0" stop-color="#b85c1e"/><stop offset=".3" stop-color="#c8692a"/><stop offset=".5" stop-color="#eda27a"/><stop offset=".68" stop-color="#c8692a"/><stop offset="1" stop-color="#b55a1c"/></linearGradient>
 <linearGradient id="bplate" x1="0" y1="0" x2="1" y2="0"><stop offset="0" stop-color="#b85c1e"/><stop offset=".45" stop-color="#c96a2b"/><stop offset=".65" stop-color="#e0885a"/><stop offset=".85" stop-color="#d27a45"/><stop offset="1" stop-color="#c26425"/></linearGradient>
 <linearGradient id="cfr" x1="0" y1="0" x2="0" y2="1"><stop offset="0" stop-color="#c46822"/><stop offset=".5" stop-color="#bd6220"/><stop offset=".8" stop-color="#a85519"/><stop offset="1" stop-color="#8a4412"/></linearGradient>
 <linearGradient id="fore" x1="0" y1="0" x2="0" y2="1"><stop offset="0" stop-color="#c96c26"/><stop offset=".6" stop-color="#bf6321"/><stop offset=".82" stop-color="#a9561a"/><stop offset="1" stop-color="#6d3508"/></linearGradient>
 <linearGradient id="fore2" x1="0" y1="0" x2="0" y2="1"><stop offset="0" stop-color="#c96c26"/><stop offset=".5" stop-color="#c26522"/><stop offset="1" stop-color="#b85e1e"/></linearGradient>
 <linearGradient id="hous" x1="0" y1="0" x2="0" y2="1"><stop offset="0" stop-color="#cc6f28"/><stop offset=".55" stop-color="#bf6321"/><stop offset="1" stop-color="#9a4c15"/></linearGradient>
 <radialGradient id="wr" cx=".55" cy=".35" r=".7"><stop offset="0" stop-color="#cf7029"/><stop offset=".7" stop-color="#c06422"/><stop offset="1" stop-color="#a95519"/></radialGradient>
 <linearGradient id="hub" x1="0" y1="0" x2=".4" y2="1"><stop offset="0" stop-color="#c56924"/><stop offset=".55" stop-color="#b85f1f"/><stop offset="1" stop-color="#8f4715"/></linearGradient>
</defs>
<!-- shadow -->
<path d="M757 834 L822.500 822 L893.500 833 L824.500 845.500 Z" fill="#484848"/>
<!-- bottom plate -->
<path d="M633.500 800.500 L610.500 812 L611.500 820 L647 826.700 L716.500 831.500 L780 831.500 L810 824 L810 808.500 L801 800.500 Z" fill="url(#bplate)"/>
<path d="M611.500 814 L647 821 L716.500 826 L780 826 L810 818 L810 824 L780 831.500 L716.500 831.500 L647 826.700 L611.500 820 Z" fill="#c5672a" opacity=".55"/>
<!-- bolts -->
<rect x="617.500" y="806.500" width="12" height="7" fill="#141414"/><rect x="620" y="804.500" width="7" height="3" fill="#222"/>
<rect x="781" y="813" width="13" height="8" fill="#141414"/><rect x="783.500" y="810.500" width="8" height="3.500" fill="#222"/>
<!-- left black boxes -->
<rect x="609.500" y="697.500" width="28" height="100.500" fill="#151515"/>
<path d="M582.500 711 L636.500 709 V774 L582.500 773.500 Z" fill="#101010"/><path d="M582.500 711 L636.500 709 V714 L582.500 716 Z" fill="#1b1b1b"/>
<!-- black cylinder -->
<path d="M635.500 673 H801.500 V803 C770 817 670 817 636.500 803 Z" fill="url(#cyl)"/>
<rect x="776.500" y="680" width="1.200" height="128" fill="#050505"/><rect x="778" y="680" width="23" height="125" fill="#0a0a0a" opacity=".6"/>
<path d="M635.500 673 H801.500 V681 C760 686 680 686 635.500 681 Z" fill="#0a0a0a" opacity=".75"/>
<!-- right motor black -->
<path d="M826 532.500 L873 534 L882.500 547.500 V578 L874.500 581 L872.500 591.500 H826 Z" fill="#0c0c0c"/>
<!-- black rect behind foot -->
<rect x="688.500" y="572.500" width="22" height="22" fill="#0b0b0b"/>
<!-- top plate -->
<path d="M617 661 C617 656.500 660 655 719 655 C778 655 821 657 821 662.500 V667 C821 671.500 780 675 719 675 C660 675 617 672 617 667.500 Z" fill="url(#plate)"/>
<path d="M617 661 C617 656.500 660 655 719 655 C778 655 821 657 821 662.500 C821 666 780 668.500 719 668.500 C660 668.500 617 666 617 661 Z" fill="#c46626"/>
<path d="M628 664 H662 V666.500 H628 Z M690 660 H740 V662 H690 Z" fill="#9c4d17" opacity=".8"/>
<!-- thin cable right -->
<path d="M826 596 C828 615 820 634 804 641.500" stroke="#161616" stroke-width="1.300" fill="none"/>
<!-- C frame (swing) -->
<path d="M786.500 510 L806.500 513.500 L823 530 L832 554 L830.500 581.500 L819.500 614.500 L799 651 L791.500 662.500 L722 662.500 L722 600 L745 560 L770 515 Z" fill="url(#cfr)"/>
<path d="M784.500 512 L804.500 541 L810 563 L804.500 592.500 L788 627 L762.500 662.500 L722 662.500 L722 600 L745 560 L765 518 Z" fill="#c16521"/>
<path d="M784.500 512 L804.500 541 L810 563 L804.500 592.500 L788 627 L762.500 662.500" stroke="#d98a4e" stroke-width="1.200" fill="none" opacity=".8"/>
<path d="M806 545.500 L809.200 563" stroke="#ffe7d8" stroke-width="1.600" fill="none"/>
<!-- hub -->
<path d="M776 522 L790 536 L794.700 559.400 L790 582.500 L776 596 L770.500 598.500 L745 599 L745 525 Z" fill="url(#hub)"/>
<path d="M781 540 C787 552 786 575 774 594" stroke="#9a4d17" stroke-width="2.200" fill="none" opacity=".8"/>
<path d="M785.500 538 C792 552 791 574 781 590" stroke="#cf7a3e" stroke-width="1" fill="none" opacity=".55"/>
<path d="M744 598.800 L770.500 598 L778 594" stroke="#140a02" stroke-width="1.800" fill="none"/>
<g fill="#5a2c0a"><circle cx="781.500" cy="523" r=".9"/><circle cx="791.500" cy="531.500" r=".9"/><circle cx="798.500" cy="546" r=".9"/><circle cx="801" cy="563" r=".9"/><circle cx="798.500" cy="580" r=".9"/><circle cx="791" cy="595" r=".9"/><circle cx="781" cy="604" r=".9"/><circle cx="770" cy="607" r=".9"/></g>
<!-- mid body below hub -->
<path d="M737 598 L780 596 L762.500 662.500 L722 662.500 L722 610 Z" fill="#c36722"/>
<path d="M751.500 631 H761.600 L751.500 653 H741.400 Z" fill="#a85519"/><path d="M748 626.500 H762" stroke="#8f4512" stroke-width="1"/><path d="M741.400 653.500 H751.500" stroke="#1c0d02" stroke-width="1"/>
<!-- foot block (lighter) -->
<path d="M708.500 568.500 L665.500 618 L664 636.500 L664 660 L724 662 L724 600 L716 578 Z" fill="#c96c27"/>
<path d="M708.500 568.500 L680 601.500 L680 660 L695 660 L695 590 Z" fill="#c4682a" opacity=".7"/>
<path d="M707.600 570.500 L715 578 L713 600 L707.600 609 Z" fill="#e59a74"/>
<path d="M708.300 641 L723 632.500 L724 662 L708 662 Z" fill="#e39670"/>
<!-- cable lower -->
<path d="M716.700 526 L716.700 572 C716 592 712 610 698 624 C688 632 676 635 662 636 L640 636 L636 637 C629 639 626 646 628 652 C630 658 637 661 642 660.500 L660 658 C676 657 695 652 706 645 C722 634 732 615 736 590 L737 532 L730 518 L716.700 510 Z" fill="#0a0a0a"/>
<path d="M626.500 646 A8 12 0 0 1 636 635.500 L639 636 A7 11 0 0 0 631 647 A7 10 0 0 0 638 657.500 L635 658 A9 11 0 0 1 626.500 646 Z" fill="#555"/>
<path d="M726.800 514 V580" stroke="#6a6a6a" stroke-width="1.600" opacity=".9"/><path d="M726.800 530 V560" stroke="#999" stroke-width="1" opacity=".8"/>
<!-- upper arm -->
<path d="M745.900 264.300 L754 258 L775.600 258 L776 330 L777.200 494 L785.500 495.800 L786.600 509.700 L781 515 L778 528 L777.500 550 L776 565 L768 584.800 L753 596 L745 598.700 L737 598 L738.700 532 L730 512 L714.900 507.400 L703 510 L712 516.500 L716.700 526 L716 577 L705.700 559.500 L696.600 526.600 L693 500 L691.300 494 L691.300 440 L697 330 L699 317.500 L703 300 L709 282.800 L716 272 L723.400 265.500 L718 318.600 L724 316.300 L730.900 305.900 L742.400 288 L743 275.900 Z" fill="#bf6321"/>
<path d="M723.400 265.500 L716 272 L709 282.800 L703 300 L699 317.500 L697 330 L691.300 440 L691.300 494 L696.600 526.600 L705.700 559.500 L716 577 L716.700 526 L712 516.500 L703 510 L714.900 507.400 L730 512 L740.500 535.700 L731.400 490 L726 440 L726 330 L724 316.300 L718 318.600 Z" fill="#b95e1e"/>
<!-- slot inner wall -->
<path d="M704 510 L716.700 508.300 L716.700 517.400 L702 517.400 Z" fill="#8f4a18"/><path d="M702 517.400 H713 V527 H703 Z" fill="#a9581d"/>
<!-- diagonal crease -->
<path d="M733 505 L741.600 536.200 L758.900 570.900 L764.700 586" stroke="#a5541b" stroke-width="2.200" fill="none" opacity=".85"/>
<!-- KUKA label lower -->
<path d="M696.400 451 L721.700 449 L721.700 464.500 L696.400 466.500 Z" fill="#1c1206"/>
<g stroke="#b9661f" stroke-width="1.300" fill="none"><path d="M698.500 453.500 V463.500 M698.500 459 L701.500 453.500 M698.500 458.500 L701.800 463.300"/><path d="M704.300 453 V461 Q704.300 463 706 463 Q707.700 463 707.700 461 V452.700"/><path d="M710.500 452.500 V462.500 M710.500 458 L713.500 452.300 M710.500 457.500 L713.800 462.300"/><path d="M716.300 462 V454 Q716.300 452 718 452 Q719.700 452 719.700 454 V461.800 M716.300 458 H719.700"/></g>
<path d="M702.300 452 V466 M708.700 451.500 V465.500 M714.700 451 V465" stroke="#be6220" stroke-width=".9"/>
<!-- small marks -->
<path d="M703.500 481 L705.500 482.500 L703.500 484 Z M711.500 480 H713.500 V483 H711.500 Z M710 488 H715" fill="#1c1206" stroke="#1c1206" stroke-width=".8"/>
<path d="M706 343.500 L708 345 L706 346.500 Z M713.500 343 H715.500 V346 H713.500 Z M702 352 H704 M708 351 H710.500 M715 350 H717" fill="#1c1206" stroke="#1c1206" stroke-width=".8"/>
<!-- black bits at left of shoulder -->
<path d="M695 271 L718 270 L718 298 L700 300 L695 293 Z" fill="#0a0a0a"/><path d="M695 309 L701 308 L701 329 L696 329 Z" fill="#0a0a0a"/>
<!-- shoulder front orange overlapping -->
<path d="M723.400 265.500 L716 272 L709 282.800 L703 300 L699 317.500 L697.300 340.600 L726 340 L722 318 L718 318.600 L718.500 300 Z" fill="#b95e1e"/>
<path d="M712 283 L718.500 280 L718 318.600 L709.500 316 Z" fill="#a9561a"/>
<!-- elbow lower shadow (black) -->
<path d="M797 329.800 L829.400 315.900 L864 309 L882.500 306.600 L887.200 311.300 L893 313.600 L887.200 313 L875.600 315.900 L864 317 L856 331 L838.600 332 L824.700 329.800 L812 333.200 L800.500 341.300 L794.700 346 L793.500 336 Z" fill="#080808"/>
<!-- below-elbow bracket -->
<path d="M775.600 327.500 L801.600 331 L800.500 335.500 L793.500 336.700 L793.500 348.300 L787.700 350.600 L775.600 351.700 Z" fill="#bd6220"/>
<path d="M783 336 L793.500 336.700 L793.500 348.300 L784 346 Z" fill="#c96c27"/>
<path d="M775.600 343.600 L782 344.200 L775.600 349.400 Z" fill="#5a2c0a"/>
<path d="M775.600 351.700 L791.200 350.600 L775.600 362.700 Z" fill="#2a1405"/>
<!-- forearm -->
<path d="M774.800 258 L802.800 265 L817.800 267.300 L822.400 273.700 L840.900 271.400 L852.500 270.200 L881.400 268.500 L879.100 282.400 L880.200 299.700 L882.500 306.600 L864 309 L829.400 315.900 L797 329.800 L780.800 329.800 L774.800 327.500 Z" fill="url(#fore2)"/>
<path d="M780.800 329.800 L800.500 319.400 L829.400 310.100 L864 302 L880.200 299.700 L882.500 306.600 L864 309 L829.400 315.900 L797 329.800 Z" fill="#9c4f18"/>
<!-- elbow recess crescent -->
<path d="M788.900 284.700 L800.500 291.600 L798.200 307.800 L788.900 319.400 L775.600 326.300 L775.600 312.400 L783.100 302 L787.700 290.500 Z" fill="url(#hub)"/>
<path d="M775.600 318 L788.900 313 L788.900 319.400 L775.600 326.300 Z" fill="#3a1b05" opacity=".8"/>
<!-- elbow bolts -->
<g fill="#3a1b05"><circle cx="781.400" cy="270.800" r=".9"/><circle cx="783.700" cy="284.100" r=".9"/><circle cx="781.400" cy="298" r=".9"/><circle cx="776.800" cy="310.100" r=".9"/><circle cx="776.500" cy="261.500" r=".8"/></g>
<!-- small black knob -->
<path d="M790 283 H806.800 L804.500 289.300 L793 288.700 Z" fill="#0e0e0e"/><rect x="795" y="284" width="4.500" height="4" fill="#4a4f55"/>
<!-- bolts on forearm -->
<ellipse cx="806.500" cy="265.800" rx="3" ry="1.100" fill="#e09060"/><ellipse cx="848" cy="269.300" rx="3.500" ry="1.400" fill="#e09060"/><ellipse cx="873" cy="268.300" rx="3" ry="1.100" fill="#e09060"/>
<!-- cable hose top -->
<path d="M718 318.600 L723.400 269 C724 254 738 240 759.800 236.200 C770 236 800 242 824.500 245.300 C832 246 838 245.500 841.800 246.400 C846 248 851 258 851.300 263.500 C851.300 267 846 270 840.900 271.400 L823 274.300 L817.800 267.300 L797 262.700 L775.600 258 L754 258.500 C748 259.500 744.500 265 743 275.900 L742.400 288 L730.900 305.900 L724 316.300 Z" fill="#0a0a0a"/>
<path d="M758 246.200 C770 244.500 782 246 792 249" stroke="#6e6e6e" stroke-width="2.200" fill="none" opacity=".8"/><path d="M764 245.800 C772 245 778 245.800 784 247.300" stroke="#c8c8c8" stroke-width="1" fill="none" opacity=".8"/>
<path d="M732.500 280 V303" stroke="#6a6a6a" stroke-width="1.800" opacity=".8"/>
<path d="M848.500 262 V266" stroke="#ddd" stroke-width=".8"/>
<!-- housing -->
<path d="M878.500 290 C878.500 272 884 260 894.700 256.200 L934 250.400 L945 252 L946 312.500 L935 317.500 L904 318.600 C888 316 878.500 305 878.500 290 Z" fill="url(#hous)"/>
<path d="M878.500 290 C878.500 272 884 260 894.700 256.200 L899 255.600 C888 262 884 276 884.500 290 C885 304 892 314 904 318.600 C888 316 878.500 305 878.500 290 Z" fill="#a9561a"/>
<path d="M925 252 C915 265 914 300 926 316" stroke="#2a1405" stroke-width="1.200" stroke-dasharray="1.200 2.800" fill="none"/>
<!-- inner section -->
<path d="M934 251 L961 253.500 L961 296 L948 309 L936 315 Z" fill="#bd6220"/>
<path d="M934 287.500 L960 287 L970 292 L965 305 L952 311 L936 316 Z" fill="#8d4613"/><path d="M937 288 L960 287.500" stroke="#120902" stroke-width="1.200"/>
<path d="M936 297 L947 293 L955 300 L945 310 Z" fill="#a9561a"/>
<circle cx="964.600" cy="300.700" r="3.800" fill="#0a0a0a"/>
<path d="M936 309 L948 306 L952 310 L940 315 Z" fill="#160b02"/>
<ellipse cx="956.500" cy="273.600" rx="4" ry="9" fill="#f6ddd2"/>
<!-- wrist lower parts -->
<path d="M995 284 L1022 276 L1056 281 L1056 290 L1030 302 L1018 303.500 L1003 298 Z" fill="#a75418"/>
<path d="M1005 290 L1025 281 L1033 286 L1012 297 Z" fill="#c16522"/><path d="M1029 284 L1052 283 L1040 292 L1020 299 Z" fill="#8a4412"/>
<path d="M1028 282 L1056 281 L1054 285 L1032 287 Z" fill="#120902"/><path d="M995 291 L1003 298 L1018 303.500 L1030 302 L1042 296 L1030 300 L1015 300 Z" fill="#120902"/>
<!-- flange -->
<path d="M1018 244 L1040 243 L1047 242.500 L1052 246 L1052 279 L1046 281 L1025 283 L1016 285 Z" fill="#bf6321"/>
<path d="M1036 243.500 L1047 242.500 L1052 246 L1052 279 L1044 281 C1038 270 1036 255 1036 243.500 Z" fill="#c56924"/>
<path d="M1038 246 C1035 256 1037 272 1042 280" stroke="#2a1405" stroke-width="1.200" stroke-dasharray="1.200 2.800" fill="none"/>
<ellipse cx="1057.100" cy="262.600" rx="11" ry="17.800" fill="#0b0b0b"/>
<!-- wrist ellipsoid -->
<ellipse cx="991.500" cy="266" rx="32.500" ry="27" transform="rotate(-14 991.500 266)" fill="url(#wr)"/>
<path d="M962 283 C972 296 996 296 1012 286" stroke="#120902" stroke-width="1.500" fill="none" opacity=".9"/>
<!-- KUKA label on wrist -->
<path d="M968.900 258.500 L1002 252.200 L1002 269 L969.200 275 Z" fill="#1c1206"/>
<g stroke="#b9661f" stroke-width="1.500" fill="none"><path d="M971.500 261.500 V272 M971.500 267.500 L975 260.800 M971.500 266.800 L975.300 271.300"/><path d="M979.300 260 V268 Q979.300 270 981.200 269.700 Q983 269.400 983 267.400 V259.300"/><path d="M987.500 258.500 V269 M987.500 264.500 L991 257.800 M987.500 263.800 L991.300 268.300"/><path d="M995.300 267.500 V259 Q995.300 257 997.200 256.700 Q999 256.400 999 258.400 V266.800 M995.300 263 L999 262.400"/></g>
<path d="M977 257 V273.500 M985.200 255.500 V272 M993.300 254 V270.500" stroke="#c06422" stroke-width="1"/>
</svg>
<!-- HUD -->
<div class="t hud" style="transform:scaleX(1.0281);transform-origin:0 50%;left:804px;top:894px">persp</div>
<div class="t hud" style="transform:scaleX(0.9535);transform-origin:0 50%;left:1460px;top:874px">Symmetry:</div>
<div class="t hud" style="transform:scaleX(0.9410);transform-origin:0 50%;left:1574px;top:874px">Off</div>
<div class="t hud" style="transform:scaleX(0.9852);transform-origin:0 50%;left:1460px;top:894px">Soft Select:</div>
<div class="t hud" style="transform:scaleX(0.9791);transform-origin:0 50%;left:1574px;top:894px">On</div>
<svg style="left:55px;top:860px" width="40" height="32" viewBox="55 860 40 32">
<path d="M71.300 886 V872.500" stroke="#2fd03a" stroke-width="1.200"/><path d="M71.500 886.300 H81" stroke="#d22" stroke-width="1.200"/><path d="M71.500 886.300 H62" stroke="#11c" stroke-width="1.200"/>
</svg>
<div class="t" style="left:68.500px;top:861px;color:#2fd03a;font-size:9px;font-weight:bold;line-height:10px">y</div>
<div class="t" style="left:81px;top:876px;color:#d22;font-size:9px;font-weight:bold;line-height:10px">x</div>
<div class="t" style="left:58px;top:876px;color:#22c;font-size:9px;font-weight:bold;line-height:10px">z</div>

<!-- outliner.html -->
<!-- right column separators -->
<div class="a" style="left:1607px;top:122px;width:1px;height:790px;background:#333"></div>
<div class="a" style="left:1614px;top:122px;width:1px;height:790px;background:#3a3a3a"></div>
<!-- vertical tabs -->
<div class="a" style="left:1902px;top:121px;width:12px;height:153px;background:#595959"></div>
<div class="a" style="left:1902px;top:275px;width:12px;height:100px;background:#3a3a3a"></div>
<div class="t" style="left:1902px;top:132.500px;width:12px;height:150px;color:#dcdcdc;font-size:11px;line-height:12px;writing-mode:vertical-rl;letter-spacing:.45px">Channel Box / Layer Editor</div>
<div class="t" style="left:1902px;top:283px;width:12px;height:95px;color:#8a8a8a;font-size:11px;line-height:12px;writing-mode:vertical-rl;letter-spacing:.5px">Attribute Editor</div>
<!-- outliner window -->
<div class="a" style="left:1615px;top:92px;width:287px;height:30px;background:#ffffff"></div>
<div class="a" style="left:1615px;top:122px;width:287px;height:549px;background:#444;border:1px solid #2c2c2c"></div>
<div class="a" style="left:1616px;top:123px;width:285px;height:547px;border:1px solid #8a8a8a;border-top-color:#777"></div>
<svg style="left:1623px;top:98px" width="17" height="16" viewBox="0 0 17 16">
  <path d="M0 3.500 L4.500 1 L8.500 0 L12.500 1 L17 3.500 L17 16 L0 16 Z" fill="url(#mg)"/>
  <path d="M3.500 13 L3.500 5.500 L8.500 1.500 L13.500 5.500 L13.500 13 L11 13 L11 8 L8.500 11 L6 8 L6 13 Z" fill="#0b6f74" opacity=".75"/>
  <rect x="0" y="13.500" width="17" height="2.500" fill="#6fdcda" opacity=".6"/>
</svg>
<div class="t" style="transform:scaleX(0.9547);transform-origin:0 50%;left:1645px;top:100px;color:#8c8c8c;font-size:12.500px;line-height:15px">Outliner</div>
<svg style="left:1770px;top:92px" width="130" height="30" viewBox="1770 92 130 30">
 <path d="M1783 106.500 H1793" stroke="#8a8a8a" stroke-width="1"/><rect x="1828.500" y="101.500" width="9.500" height="9.500" fill="none" stroke="#6a6a6a" stroke-width="1"/><path d="M1874 101 L1884 111 M1884 101 L1874 111" stroke="#6a6a6a" stroke-width="1"/>
</svg>
<div class="t" style="transform:scaleX(1.0145);transform-origin:0 50%;left:1625px;top:126px;color:#d6d6d6">Display</div>
<div class="t" style="transform:scaleX(1.0461);transform-origin:0 50%;left:1677px;top:126px;color:#d6d6d6">Show</div>
<div class="t" style="transform:scaleX(1.0387);transform-origin:0 50%;left:1721px;top:126px;color:#d6d6d6">Help</div>
<div class="a" style="left:1644px;top:145px;width:255px;height:18px;background:#2b2b2b;border-radius:2px"></div>
<svg style="left:1622px;top:148px" width="17" height="18" viewBox="1622 148 17 18">
 <rect x="1625.500" y="150.500" width="9.500" height="12" fill="none" stroke="#6a6a6a" stroke-width="1" stroke-dasharray="5 2"/><g fill="#6e6e6e"><path d="M1623 149 L1628 151.500 L1623 154.500 Z M1632.500 149 L1637.500 152 L1632.500 155 Z M1623 159 L1628 162 L1623 165 Z M1632.500 159 L1637.500 162 L1632.500 165 Z"/></g>
</svg>
<div class="a" style="left:1617px;top:171px;width:283px;height:492px;background:#2b2b2b"></div>

<svg style="left:1617px;top:171px" width="283" height="492" viewBox="1617 171 283 492">
<defs><g id="cam"><rect x="0" y="-3.500" width="9" height="7" fill="#b8b8b8"/><path d="M9.500 0 L14 -4 V4 Z" fill="#b8b8b8"/></g>
<g id="mesh"><path d="M-0.500 -2.300 L10 -7.500 L18.500 0 L6.700 6 Z" fill="#0a0a0a"/><path d="M0 -3 L10 -7.500 L18 -0.200 L6.700 4.800 Z" fill="#e6e6e6"/><path d="M0 -3 L18 -0.200 M10 -7.500 L6.700 4.800 M5 -5.250 L12.350 2.300 M14 -3.850 L3.350 0.900" stroke="#222" stroke-width=".75" fill="none"/></g></defs>
<use href="#cam" x="1663" y="181.5"/>
<use href="#cam" x="1663" y="201.5"/>
<use href="#cam" x="1663" y="221.5"/>
<use href="#cam" x="1663" y="241.5"/>
<rect x="1637.500" y="254.500" width="13" height="13" fill="none" stroke="#c8c8c8" stroke-width="1.200"/><path d="M1640.500 261 H1647.500" stroke="#c8c8c8" stroke-width="1.600"/>
<path d="M1670.100 253 V269.300 M1664 257.500 L1676.200 264.700 M1664 264.700 L1676.200 257.500" stroke="#b4a0e0" stroke-width="1.900" fill="none"/>
<path d="M1642.500 271 V651" stroke="#c0c0c0" stroke-width="1" fill="none"/>
<path d="M1642.500 281.5 H1660" stroke="#c0c0c0" stroke-width="1"/><circle cx="1662.500" cy="281.5" r="2.300" fill="#2b2b2b" stroke="#d0d0d0" stroke-width="1"/><use href="#mesh" x="1681" y="281.5"/>
<path d="M1642.500 301.5 H1660" stroke="#c0c0c0" stroke-width="1"/><circle cx="1662.500" cy="301.5" r="2.300" fill="#2b2b2b" stroke="#d0d0d0" stroke-width="1"/><use href="#mesh" x="1681" y="301.5"/>
<path d="M1642.500 321.5 H1660" stroke="#c0c0c0" stroke-width="1"/><circle cx="1662.500" cy="321.5" r="2.300" fill="#2b2b2b" stroke="#d0d0d0" stroke-width="1"/><use href="#mesh" x="1681" y="321.5"/>
<path d="M1642.500 341.5 H1660" stroke="#c0c0c0" stroke-width="1"/><circle cx="1662.500" cy="341.5" r="2.300" fill="#2b2b2b" stroke="#d0d0d0" stroke-width="1"/><use href="#mesh" x="1681" y="341.5"/>
<path d="M1642.500 361.5 H1660" stroke="#c0c0c0" stroke-width="1"/><circle cx="1662.500" cy="361.5" r="2.300" fill="#2b2b2b" stroke="#d0d0d0" stroke-width="1"/><use href="#mesh" x="1681" y="361.5"/>
<path d="M1642.500 381.5 H1660" stroke="#c0c0c0" stroke-width="1"/><circle cx="1662.500" cy="381.5" r="2.300" fill="#2b2b2b" stroke="#d0d0d0" stroke-width="1"/><use href="#mesh" x="1681" y="381.5"/>
<path d="M1642.500 401.5 H1660" stroke="#c0c0c0" stroke-width="1"/><circle cx="1662.500" cy="401.5" r="2.300" fill="#2b2b2b" stroke="#d0d0d0" stroke-width="1"/><use href="#mesh" x="1681" y="401.5"/>
<path d="M1642.500 421.5 H1660" stroke="#c0c0c0" stroke-width="1"/><circle cx="1662.500" cy="421.5" r="2.300" fill="#2b2b2b" stroke="#d0d0d0" stroke-width="1"/><use href="#mesh" x="1681" y="421.5"/>
<path d="M1642.500 441.5 H1660" stroke="#c0c0c0" stroke-width="1"/><circle cx="1662.500" cy="441.5" r="2.300" fill="#2b2b2b" stroke="#d0d0d0" stroke-width="1"/><use href="#mesh" x="1681" y="441.5"/>
<path d="M1642.500 461.5 H1660" stroke="#c0c0c0" stroke-width="1"/><circle cx="1662.500" cy="461.5" r="2.300" fill="#2b2b2b" stroke="#d0d0d0" stroke-width="1"/><use href="#mesh" x="1681" y="461.5"/>
<path d="M1642.500 481.5 H1660" stroke="#c0c0c0" stroke-width="1"/><circle cx="1662.500" cy="481.5" r="2.300" fill="#2b2b2b" stroke="#d0d0d0" stroke-width="1"/><use href="#mesh" x="1681" y="481.5"/>
<path d="M1642.500 501.5 H1660" stroke="#c0c0c0" stroke-width="1"/><circle cx="1662.500" cy="501.5" r="2.300" fill="#2b2b2b" stroke="#d0d0d0" stroke-width="1"/><use href="#mesh" x="1681" y="501.5"/>
<path d="M1642.500 521.5 H1660" stroke="#c0c0c0" stroke-width="1"/><circle cx="1662.500" cy="521.5" r="2.300" fill="#2b2b2b" stroke="#d0d0d0" stroke-width="1"/><use href="#mesh" x="1681" y="521.5"/>
<path d="M1642.500 541.5 H1660" stroke="#c0c0c0" stroke-width="1"/><circle cx="1662.500" cy="541.5" r="2.300" fill="#2b2b2b" stroke="#d0d0d0" stroke-width="1"/><use href="#mesh" x="1681" y="541.5"/>
<path d="M1642.500 561.5 H1660" stroke="#c0c0c0" stroke-width="1"/><circle cx="1662.500" cy="561.5" r="2.300" fill="#2b2b2b" stroke="#d0d0d0" stroke-width="1"/><use href="#mesh" x="1681" y="561.5"/>
<path d="M1642.500 581.5 H1660" stroke="#c0c0c0" stroke-width="1"/><circle cx="1662.500" cy="581.5" r="2.300" fill="#2b2b2b" stroke="#d0d0d0" stroke-width="1"/><use href="#mesh" x="1681" y="581.5"/>
<path d="M1642.500 601.5 H1660" stroke="#c0c0c0" stroke-width="1"/><circle cx="1662.500" cy="601.5" r="2.300" fill="#2b2b2b" stroke="#d0d0d0" stroke-width="1"/><use href="#mesh" x="1681" y="601.5"/>
<path d="M1642.500 621.5 H1660" stroke="#c0c0c0" stroke-width="1"/><circle cx="1662.500" cy="621.5" r="2.300" fill="#2b2b2b" stroke="#d0d0d0" stroke-width="1"/><use href="#mesh" x="1681" y="621.5"/>
<path d="M1642.500 641.5 H1660" stroke="#c0c0c0" stroke-width="1"/><circle cx="1662.500" cy="641.5" r="2.300" fill="#2b2b2b" stroke="#d0d0d0" stroke-width="1"/><use href="#mesh" x="1681" y="641.5"/>
<rect x="1888.500" y="171" width="11.500" height="481" fill="#333"/><path d="M1889.500 179.500 L1894 174 L1898.500 179.500 Z" fill="#c0c0c0"/><path d="M1889.500 642 L1894 647.500 L1898.500 642 Z" fill="#c0c0c0"/><rect x="1889.500" y="184" width="9.500" height="94" rx="4.500" fill="#5d5d5d"/>
<rect x="1617" y="652" width="283" height="11" fill="#3a3a3a"/><rect x="1617" y="652" width="271" height="11" fill="#333"/><path d="M1626 653.500 L1621 657.700 L1626 662 Z" fill="#c0c0c0"/><path d="M1878 653.500 L1883 657.700 L1878 662 Z" fill="#c0c0c0"/><rect x="1631" y="653" width="243.500" height="9.500" rx="4.500" fill="#5d5d5d"/>
</svg>
<div class="t" style="transform:scaleX(1.0279);transform-origin:0 50%;left:1681.500px;top:174.0px;color:#7c7c7c;">persp</div>
<div class="t" style="transform:scaleX(1.1309);transform-origin:0 50%;left:1681.500px;top:194.0px;color:#7c7c7c;">top</div>
<div class="t" style="transform:scaleX(1.1674);transform-origin:0 50%;left:1681.500px;top:214.0px;color:#7c7c7c;">front</div>
<div class="t" style="transform:scaleX(1.0056);transform-origin:0 50%;left:1681.500px;top:234.0px;color:#7c7c7c;">side</div>
<div class="t" style="transform:scaleX(0.9573);transform-origin:0 50%;left:1681.500px;top:254px;color:#d8d8d8;">obj_6_axis_Robot_Arm_Kuka_KR_16_3</div>
<div class="t" style="transform:scaleX(0.9837);transform-origin:0 50%;left:1701.500px;top:274.0px;color:#d8d8d8;">screw10</div>
<div class="t" style="transform:scaleX(0.9765);transform-origin:0 50%;left:1701.500px;top:294.0px;color:#d8d8d8;">stand_01</div>
<div class="t" style="transform:scaleX(1.0292);transform-origin:0 50%;left:1701.500px;top:314.0px;color:#d8d8d8;">stand02</div>
<div class="t" style="transform:scaleX(0.9901);transform-origin:0 50%;left:1701.500px;top:334.0px;color:#d8d8d8;">body_01</div>
<div class="t" style="transform:scaleX(1.0043);transform-origin:0 50%;left:1701.500px;top:354.0px;color:#d8d8d8;">body_06</div>
<div class="t" style="transform:scaleX(1.0043);transform-origin:0 50%;left:1701.500px;top:374.0px;color:#d8d8d8;">body_08</div>
<div class="t" style="transform:scaleX(0.9972);transform-origin:0 50%;left:1701.500px;top:394.0px;color:#d8d8d8;">body_03</div>
<div class="t" style="transform:scaleX(0.9972);transform-origin:0 50%;left:1701.500px;top:414.0px;color:#d8d8d8;">body_02</div>
<div class="t" style="transform:scaleX(1.0043);transform-origin:0 50%;left:1701.500px;top:434.0px;color:#d8d8d8;">body_04</div>
<div class="t" style="transform:scaleX(1.0283);transform-origin:0 50%;left:1701.500px;top:454.0px;color:#d8d8d8;">motor01</div>
<div class="t" style="transform:scaleX(1.0431);transform-origin:0 50%;left:1701.500px;top:474.0px;color:#d8d8d8;">motor03</div>
<div class="t" style="transform:scaleX(1.0506);transform-origin:0 50%;left:1701.500px;top:494.0px;color:#d8d8d8;">motor04</div>
<div class="t" style="transform:scaleX(1.0431);transform-origin:0 50%;left:1701.500px;top:514.0px;color:#d8d8d8;">motor05</div>
<div class="t" style="transform:scaleX(1.0881);transform-origin:0 50%;left:1701.500px;top:534.0px;color:#d8d8d8;">output01</div>
<div class="t" style="transform:scaleX(1.0506);transform-origin:0 50%;left:1701.500px;top:554.0px;color:#d8d8d8;">motor08</div>
<div class="t" style="transform:scaleX(1.1021);transform-origin:0 50%;left:1701.500px;top:574.0px;color:#d8d8d8;">output02</div>
<div class="t" style="transform:scaleX(1.0357);transform-origin:0 50%;left:1701.500px;top:594.0px;color:#d8d8d8;">motor07</div>
<div class="t" style="transform:scaleX(1.0506);transform-origin:0 50%;left:1701.500px;top:614.0px;color:#d8d8d8;">motor06</div>
<div class="t" style="transform:scaleX(0.9972);transform-origin:0 50%;left:1701.500px;top:634.0px;color:#d8d8d8;">body_07</div>
<div class="a" style="left:1616px;top:673px;width:281px;height:10px;background:#2b2b2b"></div>
<div class="a" style="left:1615px;top:685px;width:283px;height:1px;background:#333"></div>
<!-- layers.html -->
<div class="a" style="left:1615px;top:695px;width:61px;height:22px;background:#5d5d5d;border-radius:2px 2px 0 0"></div>
<div class="a" style="left:1677px;top:696px;width:60px;height:21px;background:#3a3a3a;border-radius:2px 2px 0 0"></div>
<div class="a" style="left:1738px;top:696px;width:48px;height:21px;background:#3a3a3a;border-radius:2px 2px 0 0"></div>
<div class="t" style="transform:scaleX(1.0339);transform-origin:0 50%;left:1627px;top:699px;color:#e4e4e4">Display</div>
<div class="t" style="transform:scaleX(1.0283);transform-origin:0 50%;left:1688px;top:700px;color:#b0b0b0">Render</div>
<div class="t" style="transform:scaleX(1.0294);transform-origin:0 50%;left:1749px;top:700px;color:#b0b0b0">Anim</div>
<div class="a" style="left:1615px;top:717px;width:282px;height:195px;background:#444;border:1px solid #333"></div>
<div class="t" style="transform:scaleX(0.9234);transform-origin:0 50%;left:1626px;top:721px;color:#d6d6d6">Layers</div>
<div class="t" style="transform:scaleX(1.0891);transform-origin:0 50%;left:1672.500px;top:721px;color:#d6d6d6">Options</div>
<div class="t" style="transform:scaleX(1.0298);transform-origin:0 50%;left:1729.500px;top:721px;color:#d6d6d6">Help</div>
<svg style="left:1615px;top:740px" width="283" height="172" viewBox="1615 740 283 172">
<defs><g id="lay"><path d="M-7 0 L-1 -4 L3 -2.500 L3 2.500 L-1 4 Z" fill="#c6c6c6"/></g></defs>
<use href="#lay" x="1805" y="749.500"/><path d="M1810.500 745 L1814 749 H1812 V753 H1809 V749 H1807 Z" fill="#4fb8c4"/>
<use href="#lay" x="1828" y="749.500"/><path d="M1833.500 753.500 L1837 749.500 H1835 V745.500 H1832 V749.500 H1830 Z" fill="#4fb8c4"/>
<use href="#lay" x="1855" y="749.500"/><path d="M1860.500 742.500 V749.500 M1857 746 H1864" stroke="#4fb8c4" stroke-width="1.800"/>
<use href="#lay" x="1878.500" y="749.500"/><circle cx="1883" cy="746.500" r="3" fill="#4fb8c4"/>
<rect x="1619" y="764" width="273" height="132" fill="#2b2b2b"/>
<rect x="1623.500" y="768.500" width="8" height="14" rx="2" fill="#232323" stroke="#1a1a1a"/><rect x="1635.500" y="768.500" width="8" height="14" rx="2" fill="#232323" stroke="#1a1a1a"/><rect x="1647.500" y="768.500" width="8" height="14" rx="2" fill="#232323" stroke="#1a1a1a"/>
<rect x="1659" y="768.500" width="16" height="14" fill="#a8002a"/>
<rect x="1619" y="896.500" width="273" height="11.500" fill="#333"/><path d="M1627 898 L1622 902.300 L1627 906.700 Z" fill="#c0c0c0"/><path d="M1883 898 L1888 902.300 L1883 906.700 Z" fill="#c0c0c0"/><rect x="1632" y="897.500" width="191" height="10" rx="5" fill="#5d5d5d"/>
</svg>
<div class="t" style="left:1624px;top:768px;color:#e8e8e8;font-size:11px">V</div>
<div class="t" style="left:1636px;top:768px;color:#e8e8e8;font-size:11px">P</div>
<div class="a" style="left:1678px;top:766px;width:214px;height:18px;overflow:hidden"><div class="t" style="transform:scaleX(0.9364);transform-origin:0 50%;left:0;top:2px;color:#ececec;">FBXASC054FBXASC045axis_Robot_Arm_Kuka_KR</div></div>

<!-- timeline.html -->
<div class="a" style="left:0;top:912px;width:1914px;height:1px;background:#333"></div>
<div class="a" style="left:17px;top:917px;width:1628px;height:29px;background:#2b2b2b"></div>
<div class="a" style="left:26px;top:917px;width:12px;height:29px;background:#5a5a5a"></div>
<svg style="left:0;top:912px" width="1914" height="126" viewBox="0 912 1914 126">
<g fill="#6a6a6a"><rect x="7" y="918" width="1" height="1"/><rect x="10" y="918" width="1" height="1"/><rect x="7" y="921" width="1" height="1"/><rect x="10" y="921" width="1" height="1"/><rect x="7" y="924" width="1" height="1"/><rect x="10" y="924" width="1" height="1"/><rect x="7" y="927" width="1" height="1"/><rect x="10" y="927" width="1" height="1"/><rect x="7" y="930" width="1" height="1"/><rect x="10" y="930" width="1" height="1"/><rect x="7" y="933" width="1" height="1"/><rect x="10" y="933" width="1" height="1"/><rect x="7" y="936" width="1" height="1"/><rect x="10" y="936" width="1" height="1"/><rect x="7" y="939" width="1" height="1"/><rect x="10" y="939" width="1" height="1"/><rect x="7" y="942" width="1" height="1"/><rect x="10" y="942" width="1" height="1"/><rect x="7" y="945" width="1" height="1"/><rect x="10" y="945" width="1" height="1"/></g>
<g fill="#6a6a6a"><rect x="7" y="956" width="1" height="1"/><rect x="10" y="956" width="1" height="1"/><rect x="7" y="959" width="1" height="1"/><rect x="10" y="959" width="1" height="1"/><rect x="7" y="962" width="1" height="1"/><rect x="10" y="962" width="1" height="1"/><rect x="7" y="965" width="1" height="1"/><rect x="10" y="965" width="1" height="1"/><rect x="7" y="968" width="1" height="1"/><rect x="10" y="968" width="1" height="1"/><rect x="7" y="971" width="1" height="1"/><rect x="10" y="971" width="1" height="1"/><rect x="7" y="974" width="1" height="1"/><rect x="10" y="974" width="1" height="1"/><rect x="7" y="977" width="1" height="1"/><rect x="10" y="977" width="1" height="1"/></g>
<g fill="#6a6a6a"><rect x="7" y="988" width="1" height="1"/><rect x="10" y="988" width="1" height="1"/><rect x="7" y="991" width="1" height="1"/><rect x="10" y="991" width="1" height="1"/><rect x="7" y="994" width="1" height="1"/><rect x="10" y="994" width="1" height="1"/><rect x="7" y="997" width="1" height="1"/><rect x="10" y="997" width="1" height="1"/><rect x="7" y="1000" width="1" height="1"/><rect x="10" y="1000" width="1" height="1"/><rect x="7" y="1003" width="1" height="1"/><rect x="10" y="1003" width="1" height="1"/><rect x="7" y="1006" width="1" height="1"/><rect x="10" y="1006" width="1" height="1"/><rect x="7" y="1009" width="1" height="1"/><rect x="10" y="1009" width="1" height="1"/></g>
<g fill="#6a6a6a"><rect x="7" y="1020" width="1" height="1"/><rect x="10" y="1020" width="1" height="1"/><rect x="7" y="1023" width="1" height="1"/><rect x="10" y="1023" width="1" height="1"/><rect x="7" y="1026" width="1" height="1"/><rect x="10" y="1026" width="1" height="1"/><rect x="7" y="1029" width="1" height="1"/><rect x="10" y="1029" width="1" height="1"/><rect x="7" y="1032" width="1" height="1"/><rect x="10" y="1032" width="1" height="1"/><rect x="7" y="1035" width="1" height="1"/><rect x="10" y="1035" width="1" height="1"/></g>
<path d="M80.0 931.500 V946 M147.2 931.500 V946 M214.3 931.500 V946 M281.5 931.500 V946 M348.7 931.500 V946 M415.9 931.500 V946 M483.1 931.500 V946 M550.2 931.500 V946 M617.4 931.500 V946 M684.6 931.500 V946 M751.8 931.500 V946 M818.9 931.500 V946 M886.1 931.500 V946 M953.3 931.500 V946 M1020.5 931.500 V946 M1087.6 931.500 V946 M1154.8 931.500 V946 M1222.0 931.500 V946 M1289.2 931.500 V946 M1356.3 931.500 V946 M1423.5 931.500 V946 M1490.7 931.500 V946 M1557.9 931.500 V946 M1625.0 931.500 V946 " stroke="#b8b8b8" stroke-width="1.300" fill="none"/>
<rect x="1652" y="924" width="68" height="18" rx="2" fill="#2b2b2b"/>
<rect x="1730" y="926" width="1.800" height="12" fill="#c8c8c8"/><path d="M1732.5 932.0 L1739.0 926.5 V937.5 Z M1739.0 932.0 L1745.5 926.5 V937.5 Z" fill="#c8c8c8"/>
<rect x="1755" y="926" width="1.800" height="12" fill="#c8c8c8"/><path d="M1758.0 932.0 L1766.0 926.0 V938.0 Z" fill="#c8c8c8"/>
<rect x="1777" y="926.500" width="3" height="11" fill="#e07b45"/><path d="M1778.500 923.500 V941" stroke="#e07b45" stroke-width=".9" stroke-dasharray="1.500 1"/><path d="M1782.0 932.0 L1790.0 926.0 V938.0 Z" fill="#c8c8c8"/>
<path d="M1800.5 932.0 L1812.5 924.0 V940.0 Z" fill="#c8c8c8"/>
<path d="M1836.0 932.0 L1824.0 924.0 V940.0 Z" fill="#c8c8c8"/>
<path d="M1855.0 932.0 L1847.0 926.0 V938.0 Z" fill="#c8c8c8"/><rect x="1856.500" y="926.500" width="3" height="11" fill="#e07b45"/><path d="M1858 923.500 V941" stroke="#e07b45" stroke-width=".9" stroke-dasharray="1.500 1"/>
<path d="M1879.0 932.0 L1871.0 926.0 V938.0 Z" fill="#c8c8c8"/><rect x="1880.200" y="926" width="1.800" height="12" fill="#c8c8c8"/>
<path d="M1898.0 932.0 L1891.5 926.5 V937.5 Z M1904.5 932.0 L1898.0 926.5 V937.5 Z" fill="#c8c8c8"/><rect x="1905.200" y="926" width="1.800" height="12" fill="#c8c8c8"/>
<rect x="18.500" y="955" width="67" height="23" rx="2" fill="#2b2b2b"/><rect x="94.500" y="955" width="67" height="23" rx="2" fill="#2b2b2b"/>
<rect x="169" y="955.500" width="1280" height="22.500" rx="2" fill="#373737"/><rect x="176.500" y="957.500" width="769" height="19" rx="2" fill="#5d5d5d"/>
<rect x="180.500" y="960.500" width="12.500" height="13" rx="1.500" fill="#a8a8a8"/><rect x="929.500" y="960.500" width="12.500" height="13" rx="1.500" fill="#a8a8a8"/>
<rect x="1456.500" y="955" width="67" height="23" rx="2" fill="#2b2b2b"/><rect x="1531.500" y="955" width="68" height="23" rx="2" fill="#2b2b2b"/>
<path d="M1605 962.500 H1615 L1610 968.500 Z" fill="#2e2e2e" stroke="#8a8a8a" stroke-width="1"/><path d="M1734.500 962.500 H1744.500 L1739.500 968.500 Z" fill="#2e2e2e" stroke="#8a8a8a" stroke-width="1"/>
<rect x="1622.500" y="954.500" width="100.500" height="23.500" rx="2" fill="#444" stroke="#555"/><rect x="1751.500" y="954.500" width="99.500" height="23.500" rx="2" fill="#444" stroke="#555"/>
<path d="M1862.500 968 A7.500 7.500 0 0 1 1875 960.500 M1877.500 965 A7.500 7.500 0 0 1 1865 972.500" stroke="#c8c8c8" stroke-width="1.100" fill="none"/><path d="M1874 958 L1877 961.500 L1872.500 962 Z M1866 975 L1863 971.500 L1867.500 971 Z" fill="#c8c8c8"/><rect x="1868.800" y="961" width="2.400" height="10" fill="#e07b45"/><path d="M1864 966.500 H1876" stroke="#c8c8c8" stroke-width="1" stroke-dasharray="3 2.500"/>
<circle cx="1888.500" cy="961" r="2.600" fill="none" stroke="#c8c8c8" stroke-width="1.300"/><circle cx="1888.500" cy="961" r="4" fill="none" stroke="#c8c8c8" stroke-width="1.200" stroke-dasharray="1.300 1.840"/><circle cx="1899.500" cy="961.500" r="1.800" fill="#e07b45"/><path d="M1893 966 L1897.500 964.500 L1901 967.500 L1904 966.500 M1897.500 964.500 L1896.500 970 L1899.500 972.500 L1899 977 M1896.500 970 L1893.500 973.500 L1890 974" stroke="#e07b45" stroke-width="1.700" fill="none" stroke-linecap="round" stroke-linejoin="round"/>
<rect x="62.500" y="987.500" width="618" height="23" rx="2" fill="#2b2b2b"/><rect x="687" y="987.500" width="1200" height="23" rx="2" fill="#2b2b2b"/>
<rect x="1893" y="990" width="18" height="17.500" fill="#cfcfcf"/><rect x="1893" y="992.200" width="18" height="1" fill="#444"/><path d="M1894.500 991 H1899" stroke="#444" stroke-width=".8" stroke-dasharray="1 .7"/>
<rect x="0" y="1016" width="1914" height="1" fill="#333"/>
</svg>
<div class="t tl" style="left:82.0px">5</div>
<div class="t tl" style="left:149.2px">10</div>
<div class="t tl" style="left:216.3px">15</div>
<div class="t tl" style="left:283.5px">20</div>
<div class="t tl" style="left:350.7px">25</div>
<div class="t tl" style="left:417.9px">30</div>
<div class="t tl" style="left:485.1px">35</div>
<div class="t tl" style="left:552.2px">40</div>
<div class="t tl" style="left:619.4px">45</div>
<div class="t tl" style="left:686.6px">50</div>
<div class="t tl" style="left:753.8px">55</div>
<div class="t tl" style="left:820.9px">60</div>
<div class="t tl" style="left:888.1px">65</div>
<div class="t tl" style="left:955.3px">70</div>
<div class="t tl" style="left:1022.5px">75</div>
<div class="t tl" style="left:1089.6px">80</div>
<div class="t tl" style="left:1156.8px">85</div>
<div class="t tl" style="left:1224.0px">90</div>
<div class="t tl" style="left:1291.2px">95</div>
<div class="t tl" style="left:1358.3px">100</div>
<div class="t tl" style="left:1425.5px">105</div>
<div class="t tl" style="left:1492.7px">110</div>
<div class="t tl" style="left:1559.9px">115</div>
<div class="t tl" style="left:1627.0px">120</div>
<div class="t" style="left:28px;top:931px;color:#f0f0f0;font-size:11px">1</div>
<div class="t" style="left:1658.500px;top:926px;color:#e0e0e0;font-size:11px">1</div>
<div class="t" style="left:23.500px;top:960px;color:#e0e0e0;font-size:11px">1</div>
<div class="t" style="left:99.500px;top:960px;color:#e0e0e0;font-size:11px">1</div>
<div class="t" style="left:196.500px;top:960px;color:#e0e0e0;font-size:11px">1</div>
<div class="t" style="transform:scaleX(0.9042);transform-origin:0 50%;left:907.700px;top:960px;color:#e0e0e0;font-size:11px">120</div>
<div class="t" style="left:1461.500px;top:960px;color:#e0e0e0;font-size:11px">120</div>
<div class="t" style="left:1537px;top:960px;color:#e0e0e0;font-size:11px">200</div>
<div class="t" style="transform:scaleX(0.9677);transform-origin:0 50%;left:1628px;top:960px;color:#d4d4d4;font-size:11.500px">No Anim Layer</div>
<div class="t" style="transform:scaleX(0.9678);transform-origin:0 50%;left:1757px;top:960px;color:#d4d4d4;font-size:11.500px">No Character Set</div>
<div class="t" style="transform:scaleX(0.8877);transform-origin:0 50%;left:28px;top:993px;color:#e0e0e0;font-size:11.500px">MEL</div>
<div class="t" style="left:1896px;top:994.500px;color:#333;font-size:9px;font-weight:bold;line-height:11px;letter-spacing:-.3px">{;}</div>
</body></html>
